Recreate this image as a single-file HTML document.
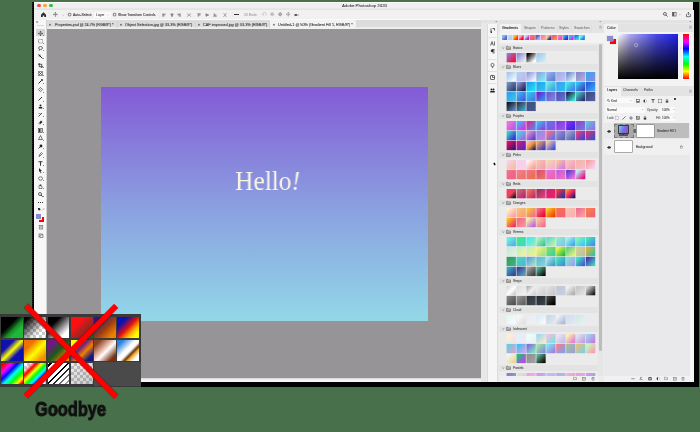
<!DOCTYPE html><html><head><meta charset="utf-8"><style>
*{margin:0;padding:0;box-sizing:border-box}
html,body{width:700px;height:432px;overflow:hidden;background:#48714b;font-family:"Liberation Sans",sans-serif;position:relative}
.ab{position:absolute}
.t{position:absolute;white-space:nowrap;color:#3a3a3a;font-size:3.6px;line-height:4px;will-change:transform;-webkit-text-stroke:0.1px currentColor}
.sw{position:absolute;width:9.3px;height:9.3px}
.rs{position:absolute;width:5px;height:5px}
.ic{position:absolute;overflow:visible}
</style></head><body>
<div class="ab" style="left:33px;top:2px;width:666px;height:385px;background:#000"></div>
<div class="ab" style="left:32px;top:2px;width:1px;height:385px;background:repeating-linear-gradient(#000 0 1px,#1a2a1c 1px 2px)"></div>
<div class="ab" style="left:33.5px;top:2px;width:659.6px;height:380px;background:#f4f4f4"></div>
<div class="ab" style="left:33.5px;top:2px;width:659.6px;height:8px;background:linear-gradient(#fbfbfb 0,#fbfbfb 1px,#efefef 1.5px,#efefef 6.3px,#e3e3e3 6.6px,#e3e3e3 7.8px,#f2f2f2 8px)"></div>
<div class="ab" style="left:37.2px;top:3.8px;width:3.6px;height:3.6px;border-radius:50%;background:#ee4a4e"></div>
<div class="ab" style="left:43.4px;top:3.8px;width:3.6px;height:3.6px;border-radius:50%;background:#f4a82a"></div>
<div class="ab" style="left:49.4px;top:3.8px;width:3.6px;height:3.6px;border-radius:50%;background:#2cc23c"></div>
<div class="t" style="left:341.5px;top:4px;font-size:4.3px;color:#404040">Adobe Photoshop 2020</div>
<div class="ab" style="left:33.5px;top:9.5px;width:660px;height:10px;background:#f1f1f1"></div>
<svg class="ic" style="left:40.50px;top:12.30px" width="5.00" height="5.00" viewBox="0 0 10 10" ><path d="M5 0.5L10 5.5V10H6.5V7H3.5V10H0V5.5Z" fill="#2b2b2b"/></svg>
<div class="ab" style="left:49px;top:11px;width:0.5px;height:7.5px;background:#ececec"></div>
<svg class="ic" style="left:53.20px;top:12.40px" width="4.80" height="4.80" viewBox="0 0 10 10" ><path d="M5 1V9M1 5H9" stroke="#6a6a6a" stroke-width="1.2"/><path d="M5 0L3 2.4H7ZM5 10L3 7.6H7ZM0 5L2.4 3V7ZM10 5L7.6 3V7Z" fill="#6a6a6a"/></svg>
<svg class="ic" style="left:61.50px;top:13.80px" width="2.20" height="2.20" viewBox="0 0 10 10" ><path d="M1 3L5 7L9 3" stroke="#777" stroke-width="1.5" fill="none"/></svg>
<div class="ab" style="left:66px;top:11px;width:0.5px;height:7.5px;background:#ececec"></div>
<svg class="ic" style="left:68.00px;top:13.20px" width="3.20" height="3.20" viewBox="0 0 10 10" ><rect x="1" y="1" width="8" height="8" rx="2" fill="none" stroke="#444" stroke-width="2"/></svg>
<div class="t" style="left:72.6px;top:12.6px;font-size:3.55px">Auto-Select:</div>
<div class="ab" style="left:94px;top:12px;width:16.5px;height:5.5px;background:#fafafa;border-radius:1px"></div>
<div class="t" style="left:96px;top:12.7px;font-size:3.4px;color:#555">Layer</div>
<svg class="ic" style="left:107.30px;top:14.10px" width="2.00" height="2.00" viewBox="0 0 10 10" ><path d="M1 3L5 7L9 3" stroke="#777" stroke-width="1.5" fill="none"/></svg>
<svg class="ic" style="left:112.50px;top:13.20px" width="3.20" height="3.20" viewBox="0 0 10 10" ><rect x="1" y="1" width="8" height="8" rx="2" fill="none" stroke="#444" stroke-width="2"/></svg>
<div class="t" style="left:117.5px;top:12.6px;font-size:3.32px">Show Transform Controls</div>
<div class="ab" style="left:158.5px;top:11px;width:0.5px;height:7.5px;background:#ececec"></div>
<svg class="ic" style="left:161.80px;top:12.80px" width="4.00" height="4.00" viewBox="0 0 10 10" ><path d="M1.5 0.5V9.5" stroke="#555" stroke-width="1.2"/><rect x="2.5" y="2" width="6.5" height="2.2" fill="#666"/><rect x="2.5" y="6" width="4" height="2.2" fill="#666"/></svg>
<svg class="ic" style="left:169.50px;top:12.80px" width="4.00" height="4.00" viewBox="0 0 10 10" ><path d="M5 0.5V9.5" stroke="#555" stroke-width="1.2"/><rect x="1" y="2" width="8" height="2.2" fill="#666"/><rect x="2.5" y="6" width="5" height="2.2" fill="#666"/></svg>
<svg class="ic" style="left:177.00px;top:12.80px" width="4.00" height="4.00" viewBox="0 0 10 10" ><path d="M8.5 0.5V9.5" stroke="#555" stroke-width="1.2"/><rect x="1" y="2" width="6.5" height="2.2" fill="#666"/><rect x="3.5" y="6" width="4" height="2.2" fill="#666"/></svg>
<svg class="ic" style="left:186.50px;top:12.80px" width="4.00" height="4.00" viewBox="0 0 10 10" ><path d="M1 1L4 5L1 9M9 1L6 5L9 9" stroke="#555" stroke-width="1.3" fill="none"/><path d="M4 5H6" stroke="#555"/></svg>
<svg class="ic" style="left:196.50px;top:12.80px" width="4.00" height="4.00" viewBox="0 0 10 10" ><path d="M0.5 1.5H9.5" stroke="#555" stroke-width="1.2"/><rect x="2" y="2.5" width="2.2" height="6.5" fill="#666"/><rect x="6" y="2.5" width="2.2" height="4" fill="#666"/></svg>
<svg class="ic" style="left:205.00px;top:12.80px" width="4.00" height="4.00" viewBox="0 0 10 10" ><path d="M0.5 5H9.5" stroke="#555" stroke-width="1.2"/><rect x="2" y="1" width="2.2" height="8" fill="#666"/><rect x="6" y="2.5" width="2.2" height="5" fill="#666"/></svg>
<svg class="ic" style="left:213.00px;top:12.80px" width="4.00" height="4.00" viewBox="0 0 10 10" ><path d="M0.5 8.5H9.5" stroke="#555" stroke-width="1.2"/><rect x="2" y="1" width="2.2" height="6.5" fill="#666"/><rect x="6" y="3.5" width="2.2" height="4" fill="#666"/></svg>
<svg class="ic" style="left:223.00px;top:12.80px" width="4.00" height="4.00" viewBox="0 0 10 10" ><path d="M1 1L5 4L9 1M1 9L5 6L9 9" stroke="#555" stroke-width="1.3" fill="none"/><path d="M5 4V6" stroke="#555"/></svg>
<div class="ab" style="left:232px;top:11px;width:0.5px;height:7.5px;background:#ececec"></div>
<div class="ab" style="left:234px;top:14.2px;width:5.2px;height:1.1px;background:#333"></div>
<div class="t" style="left:243.5px;top:12.6px;font-size:3.1px;color:#aaa">3D Mode:</div>
<svg class="ic" style="left:261.50px;top:12.40px" width="4.40" height="4.40" viewBox="0 0 10 10" ><path d="M2 7A4 4 0 1 1 8 8" fill="none" stroke="#b0b0b0" stroke-width="1.3"/><path d="M1 5L3 8L5 6" fill="#b0b0b0"/></svg>
<svg class="ic" style="left:270.20px;top:12.30px" width="4.40" height="4.40" viewBox="0 0 10 10" ><circle cx="5" cy="5" r="4.3" fill="#c4c4c4"/><path d="M2 4Q5 2 8 4" stroke="#aaa" fill="none"/></svg>
<svg class="ic" style="left:278.00px;top:12.40px" width="4.40" height="4.40" viewBox="0 0 10 10" ><path d="M5 0L10 5L5 10L0 5Z" fill="#8a8a8a"/><path d="M5 2V8M2 5H8" stroke="#f1f1f1" stroke-width="0.9"/></svg>
<svg class="ic" style="left:286.30px;top:12.40px" width="4.40" height="4.40" viewBox="0 0 10 10" ><path d="M5 1V9M1 5H9" stroke="#777" stroke-width="1"/><path d="M5 0L3.3 2H6.7ZM5 10L3.3 8H6.7ZM0 5L2 3.3V6.7ZM10 5L8 3.3V6.7Z" fill="#777"/></svg>
<svg class="ic" style="left:294.00px;top:12.60px" width="4.60" height="4.00" viewBox="0 0 10 10" ><rect x="0.5" y="2.5" width="6" height="5" fill="#555"/><path d="M6.5 5L10 2.5V7.5Z" fill="#777"/></svg>
<svg class="ic" style="left:662.50px;top:12.20px" width="4.80" height="4.80" viewBox="0 0 10 10" ><circle cx="4" cy="4" r="3" fill="none" stroke="#444" stroke-width="1.6"/><path d="M6.5 6.5L9.5 9.5" stroke="#444" stroke-width="1.8"/></svg>
<svg class="ic" style="left:672.00px;top:12.40px" width="4.60" height="4.40" viewBox="0 0 10 10" ><rect x="0.8" y="0.8" width="8.4" height="8.4" fill="none" stroke="#555" stroke-width="1.5"/><rect x="1" y="1" width="4" height="8" fill="#555"/></svg>
<svg class="ic" style="left:678.50px;top:14.00px" width="1.80" height="1.60" viewBox="0 0 10 10" ><path d="M0 2L5 8L10 2Z" fill="#888"/></svg>
<svg class="ic" style="left:686.20px;top:11.80px" width="4.80" height="5.00" viewBox="0 0 10 10" ><path d="M1 4V9.5H9V4" fill="none" stroke="#444" stroke-width="1.5"/><path d="M5 0.5V6M3 2.5L5 0.5L7 2.5" fill="none" stroke="#444" stroke-width="1.5"/></svg>
<div class="ab" style="left:47px;top:19px;width:434px;height:9.6px;background:linear-gradient(#fafafa 0,#fafafa 0.7px,#dcdcdc 1px,#dcdcdc 7.8px,#ededed 8.2px)"></div>
<div class="ab" style="left:117.0px;top:20.5px;width:0.5px;height:7px;background:#d6d6d6"></div>
<div class="t" style="left:49.0px;top:22.6px;font-size:3.4px;color:#333">&#215;</div>
<div class="t" style="left:54.5px;top:22.7px;font-size:3.69px;color:#3a3a3a">Properties.psd @ 24.7% (RGB/8*) *</div>
<div class="ab" style="left:195.0px;top:20.5px;width:0.5px;height:7px;background:#d6d6d6"></div>
<div class="t" style="left:120.0px;top:22.6px;font-size:3.4px;color:#333">&#215;</div>
<div class="t" style="left:125.2px;top:22.7px;font-size:3.82px;color:#3a3a3a">Object Selection.jpg @ 33.3% (RGB/8*)</div>
<div class="ab" style="left:269.2px;top:20.5px;width:0.5px;height:7px;background:#d6d6d6"></div>
<div class="t" style="left:198.0px;top:22.6px;font-size:3.4px;color:#333">&#215;</div>
<div class="t" style="left:202.8px;top:22.7px;font-size:3.85px;color:#3a3a3a">CAF improved.jpg @ 33.3% (RGB/8*)</div>
<div class="ab" style="left:269.7px;top:19.8px;width:86.7px;height:8.8px;background:#f2f2f2"></div>
<div class="t" style="left:273.0px;top:22.6px;font-size:3.4px;color:#333">&#215;</div>
<div class="t" style="left:278.0px;top:22.7px;font-size:3.82px;color:#3a3a3a">Untitled-1 @ 50% (Gradient Fill 1, RGB/8*) *</div>
<div class="ab" style="left:33.5px;top:19.5px;width:13.2px;height:362.5px;background:#f7f7f7;border-right:0.6px solid #d2d2d2"></div>
<svg class="ic" style="left:35.60px;top:20.60px" width="2.60" height="2.00" viewBox="0 0 10 10" ><path d="M0 1L4 5L0 9M5 1L9 5L5 9" stroke="#333" stroke-width="2.4" fill="none"/></svg>
<div class="ab" style="left:36.6px;top:24.8px;width:7.6px;height:0.6px;background:#d8d8d8"></div>
<div class="ab" style="left:35.8px;top:28.8px;width:9.4px;height:7.3px;background:#d5d5d5"></div>
<svg class="ic" style="left:38.00px;top:31.00px" width="5.00" height="5.00" viewBox="0 0 10 10" ><path d="M5 1V9M1 5H9" stroke="#555" stroke-width="0.9"/><path d="M5 0L2.8 2.6H7.2ZM5 10L2.8 7.4H7.2ZM0 5L2.6 2.8V7.2ZM10 5L7.4 2.8V7.2Z" fill="#333"/></svg>
<div class="ab" style="left:43.3px;top:35.2px;width:1px;height:1px;background:#888"></div>
<svg class="ic" style="left:38.00px;top:38.50px" width="5.00" height="5.00" viewBox="0 0 10 10" ><rect x="1" y="1" width="8" height="7" fill="none" stroke="#444" stroke-width="1.2" stroke-dasharray="1.5 1"/></svg>
<div class="ab" style="left:43.3px;top:42.7px;width:1px;height:1px;background:#888"></div>
<svg class="ic" style="left:38.00px;top:46.00px" width="5.00" height="5.00" viewBox="0 0 10 10" ><ellipse cx="5" cy="4" rx="4" ry="3" fill="none" stroke="#333" stroke-width="1.4"/><path d="M3 7L2 10" stroke="#333" stroke-width="1.2"/></svg>
<div class="ab" style="left:43.3px;top:50.2px;width:1px;height:1px;background:#888"></div>
<svg class="ic" style="left:38.00px;top:54.00px" width="5.00" height="5.00" viewBox="0 0 10 10" ><path d="M1 1L9 9" stroke="#222" stroke-width="2"/><path d="M1 4H4M4 1V4" stroke="#222" stroke-width="1.2"/></svg>
<div class="ab" style="left:43.3px;top:58.2px;width:1px;height:1px;background:#888"></div>
<svg class="ic" style="left:38.00px;top:62.50px" width="5.00" height="5.00" viewBox="0 0 10 10" ><path d="M2.5 0V7.5H10M0 2.5H7.5V10" stroke="#222" stroke-width="1.5" fill="none"/></svg>
<div class="ab" style="left:43.3px;top:66.7px;width:1px;height:1px;background:#888"></div>
<svg class="ic" style="left:38.00px;top:70.50px" width="5.00" height="5.00" viewBox="0 0 10 10" ><path d="M1 1L9 9M9 1L1 9" stroke="#333" stroke-width="1.4"/><rect x="1.5" y="1.5" width="7" height="7" fill="none" stroke="#333" stroke-width="1"/></svg>
<div class="ab" style="left:43.3px;top:74.7px;width:1px;height:1px;background:#888"></div>
<svg class="ic" style="left:38.00px;top:78.50px" width="5.00" height="5.00" viewBox="0 0 10 10" ><path d="M1 9L7 3" stroke="#222" stroke-width="2"/><circle cx="8" cy="2" r="1.8" fill="#222"/></svg>
<div class="ab" style="left:43.3px;top:82.7px;width:1px;height:1px;background:#888"></div>
<svg class="ic" style="left:38.00px;top:87.30px" width="5.00" height="5.00" viewBox="0 0 10 10" ><rect x="2" y="2" width="6" height="6" transform="rotate(45 5 5)" fill="none" stroke="#444" stroke-width="1.3"/><path d="M3 7L7 3" stroke="#444" stroke-width="1"/></svg>
<div class="ab" style="left:43.3px;top:91.5px;width:1px;height:1px;background:#888"></div>
<svg class="ic" style="left:38.00px;top:96.30px" width="5.00" height="5.00" viewBox="0 0 10 10" ><path d="M1 9L8 2" stroke="#222" stroke-width="1.8"/></svg>
<div class="ab" style="left:43.3px;top:100.5px;width:1px;height:1px;background:#888"></div>
<svg class="ic" style="left:38.00px;top:104.00px" width="5.00" height="5.00" viewBox="0 0 10 10" ><circle cx="5" cy="3" r="2" fill="#222"/><rect x="1.5" y="6" width="7" height="3" fill="#222"/></svg>
<div class="ab" style="left:43.3px;top:108.2px;width:1px;height:1px;background:#888"></div>
<svg class="ic" style="left:38.00px;top:111.80px" width="5.00" height="5.00" viewBox="0 0 10 10" ><path d="M1 9L8 2" stroke="#222" stroke-width="1.6"/><path d="M1 4L3 2L5 4" stroke="#222" stroke-width="1" fill="none"/></svg>
<div class="ab" style="left:43.3px;top:116.0px;width:1px;height:1px;background:#888"></div>
<svg class="ic" style="left:38.00px;top:119.40px" width="5.00" height="5.00" viewBox="0 0 10 10" ><path d="M2 8L6 3L9 6L5 10Z" fill="#222"/><path d="M0 9.5H6" stroke="#555" stroke-width="0.8"/></svg>
<div class="ab" style="left:43.3px;top:123.6px;width:1px;height:1px;background:#888"></div>
<svg class="ic" style="left:38.00px;top:127.50px" width="5.00" height="5.00" viewBox="0 0 10 10" ><rect x="1" y="1" width="8" height="8" fill="none" stroke="#333" stroke-width="1.2"/><rect x="2" y="2" width="3" height="6" fill="#333"/><rect x="5" y="2" width="2" height="6" fill="#888"/></svg>
<div class="ab" style="left:43.3px;top:131.7px;width:1px;height:1px;background:#888"></div>
<svg class="ic" style="left:38.00px;top:135.40px" width="5.00" height="5.00" viewBox="0 0 10 10" ><path d="M5 1L9 9H1Z" fill="none" stroke="#333" stroke-width="1.3"/></svg>
<div class="ab" style="left:43.3px;top:139.6px;width:1px;height:1px;background:#888"></div>
<svg class="ic" style="left:38.00px;top:143.80px" width="5.00" height="5.00" viewBox="0 0 10 10" ><circle cx="6" cy="4" r="2.8" fill="#222"/><path d="M4 6L1 9" stroke="#222" stroke-width="1.5"/></svg>
<div class="ab" style="left:43.3px;top:148.0px;width:1px;height:1px;background:#888"></div>
<svg class="ic" style="left:38.00px;top:152.40px" width="5.00" height="5.00" viewBox="0 0 10 10" ><path d="M2 9L4 4L7 1L9 3L6 6Z" fill="none" stroke="#333" stroke-width="1.3"/></svg>
<div class="ab" style="left:43.3px;top:156.6px;width:1px;height:1px;background:#888"></div>
<svg class="ic" style="left:38.00px;top:160.70px" width="5.00" height="5.00" viewBox="0 0 10 10" ><path d="M1 1.5H9M5 1.5V9.5" stroke="#222" stroke-width="1.8"/></svg>
<div class="ab" style="left:43.3px;top:164.9px;width:1px;height:1px;background:#888"></div>
<svg class="ic" style="left:38.00px;top:168.00px" width="5.00" height="5.00" viewBox="0 0 10 10" ><path d="M2 0L8 6H5L7 10L5.5 10.5L3.5 6.5L2 8Z" fill="#222"/></svg>
<div class="ab" style="left:43.3px;top:172.2px;width:1px;height:1px;background:#888"></div>
<svg class="ic" style="left:38.00px;top:176.00px" width="5.00" height="5.00" viewBox="0 0 10 10" ><ellipse cx="5" cy="5" rx="4" ry="3.5" fill="none" stroke="#333" stroke-width="1.2"/></svg>
<div class="ab" style="left:43.3px;top:180.2px;width:1px;height:1px;background:#888"></div>
<svg class="ic" style="left:38.00px;top:184.00px" width="5.00" height="5.00" viewBox="0 0 10 10" ><path d="M2 9V4C2 3 3.5 3 3.5 4V2C3.5 1 5 1 5 2V4 2C5 1 6.5 1 6.5 2V5C6.5 4 8 4 8 5V9Z" fill="none" stroke="#333" stroke-width="1.1"/></svg>
<div class="ab" style="left:43.3px;top:188.2px;width:1px;height:1px;background:#888"></div>
<svg class="ic" style="left:38.00px;top:192.00px" width="5.00" height="5.00" viewBox="0 0 10 10" ><circle cx="4" cy="4" r="3" fill="none" stroke="#222" stroke-width="1.4"/><path d="M6 6L9.5 9.5" stroke="#222" stroke-width="1.8"/></svg>
<div class="ab" style="left:43.3px;top:196.2px;width:1px;height:1px;background:#888"></div>
<div class="ab" style="left:38.4px;top:202.3px;width:5px;height:1.1px;background:repeating-linear-gradient(90deg,#333 0 1.2px,transparent 1.2px 1.9px)"></div>
<svg class="ic" style="left:37.50px;top:207.50px" width="3.00" height="3.00" viewBox="0 0 10 10" ><rect x="0" y="0" width="6" height="6" fill="#222"/><rect x="3" y="3" width="6" height="6" fill="none" stroke="#222"/></svg>
<svg class="ic" style="left:42.00px;top:207.50px" width="3.00" height="3.00" viewBox="0 0 10 10" ><path d="M1 8L8 1" stroke="#444" stroke-width="1.5"/></svg>
<div class="ab" style="left:38.9px;top:216.7px;width:5.5px;height:5.3px;background:#f00"></div>
<div class="ab" style="left:36px;top:213.8px;width:5.2px;height:5.2px;background:#8a8ad0;box-shadow:0.4px 0.4px 0 0.5px #fff"></div>
<svg class="ic" style="left:38.00px;top:225.00px" width="6.00" height="4.50" viewBox="0 0 10 10" ><rect x="1" y="1" width="8" height="8" fill="none" stroke="#555" stroke-width="1.2"/><circle cx="5" cy="5" r="2.3" fill="none" stroke="#555" stroke-width="1"/></svg>
<svg class="ic" style="left:38.00px;top:232.50px" width="6.00" height="5.00" viewBox="0 0 10 10" ><rect x="1" y="2" width="7" height="6" fill="none" stroke="#555" stroke-width="1.2"/><rect x="3" y="4" width="6" height="5" fill="#f7f7f7" stroke="#555" stroke-width="1.2"/></svg>
<div class="ab" style="left:47px;top:28.6px;width:434px;height:349.4px;background:#969496"></div>
<div class="ab" style="left:47px;top:377.8px;width:434px;height:4.2px;background:linear-gradient(#cfcfcf,#f0f0f0 40%,#fafafa)"></div>
<div class="ab" style="left:100.7px;top:86.8px;width:327.2px;height:234px;background:linear-gradient(#845ad6,#8a9ee0 50%,#92d8e8)"></div>
<div class="ab" style="left:235px;top:165px;font-family:'Liberation Serif',serif;font-size:26.5px;line-height:32px;color:#fbf6e4;white-space:nowrap;transform-origin:0 0;transform:scaleX(0.96);will-change:transform">Hello<i>!</i></div>
<div class="ab" style="left:481px;top:19.5px;width:212.5px;height:362.5px;background:#e8e8e8"></div>
<div class="ab" style="left:481px;top:19.5px;width:212.5px;height:3.5px;background:#e3e3e3"></div>
<svg class="ic" style="left:495.00px;top:20.50px" width="2.40" height="1.60" viewBox="0 0 10 10" ><path d="M0 2L5 8L10 2Z" fill="#555"/></svg>
<svg class="ic" style="left:598.50px;top:20.50px" width="2.40" height="1.60" viewBox="0 0 10 10" ><path d="M0 2L5 8L10 2Z" fill="#555"/></svg>
<svg class="ic" style="left:689.40px;top:20.50px" width="2.40" height="1.60" viewBox="0 0 10 10" ><path d="M0 2L5 8L10 2Z" fill="#555"/></svg>
<div class="ab" style="left:487.2px;top:23.5px;width:11.2px;height:358.5px;background:#f6f6f6;border-left:0.5px solid #dcdcdc;border-right:0.5px solid #dcdcdc"></div>
<div class="ab" style="left:487.5px;top:37.0px;width:10.6px;height:1px;background:#e2e2e2"></div>
<div class="ab" style="left:487.5px;top:59.0px;width:10.6px;height:1px;background:#e2e2e2"></div>
<div class="ab" style="left:487.5px;top:70.5px;width:10.6px;height:1px;background:#e2e2e2"></div>
<div class="ab" style="left:487.5px;top:82.5px;width:10.6px;height:1px;background:#e2e2e2"></div>
<svg class="ic" style="left:490.40px;top:28.00px" width="5.00" height="5.00" viewBox="0 0 10 10" ><path d="M2 1V9M2 9H4M5 1L9 1L9 5" stroke="#222" stroke-width="1.5" fill="none"/><circle cx="2.5" cy="8" r="1.5" fill="#222"/></svg>
<svg class="ic" style="left:490.40px;top:40.70px" width="5.00" height="5.00" viewBox="0 0 10 10" ><path d="M1 9L4 1L7 9M2.5 6H5.5M9 1V9" stroke="#222" stroke-width="1.2" fill="none"/></svg>
<svg class="ic" style="left:490.40px;top:49.00px" width="5.00" height="5.00" viewBox="0 0 10 10" ><path d="M4 1H9M6 1V9M8 1V9" stroke="#222" stroke-width="1.2"/><circle cx="4" cy="3.5" r="2.5" fill="#222"/></svg>
<svg class="ic" style="left:490.40px;top:62.50px" width="5.00" height="5.00" viewBox="0 0 10 10" ><circle cx="5" cy="4" r="3.2" fill="none" stroke="#222" stroke-width="1.2"/><path d="M3.5 8H6.5M4 9.5H6" stroke="#222" stroke-width="1"/></svg>
<svg class="ic" style="left:490.40px;top:75.00px" width="5.00" height="5.00" viewBox="0 0 10 10" ><rect x="1" y="1" width="8" height="8" rx="1" fill="none" stroke="#222" stroke-width="1.3"/><path d="M5 5V1M5 5H9" stroke="#222" stroke-width="1.2"/></svg>
<svg class="ic" style="left:490.40px;top:87.70px" width="5.00" height="5.00" viewBox="0 0 10 10" ><circle cx="3" cy="3" r="2" fill="#222"/><circle cx="7" cy="3" r="2" fill="#222"/><rect x="0.5" y="6" width="9" height="3" fill="#222"/></svg>
<svg class="ic" style="left:492px;top:161px" width="5" height="6" viewBox="0 0 10 12"><path d="M3 2L7.5 8.5L5 10Z" fill="#fff" stroke="#fff" stroke-width="2.5"/><ellipse cx="5" cy="6" rx="1.7" ry="3" transform="rotate(-30 5 6)" fill="#111"/></svg>
<div class="ab" style="left:499px;top:23px;width:104.5px;height:359px;background:#ebebeb"></div>
<div class="ab" style="left:499px;top:23.4px;width:104.5px;height:9.4px;background:#e4e4e4"></div>
<div class="ab" style="left:500.3px;top:24px;width:20.5px;height:8.5px;background:#f2f2f2"></div>
<div class="t" style="left:502.3px;top:25.9px;font-size:3.7px;color:#2a2a2a">Gradients</div>
<div class="t" style="left:523.5px;top:25.9px;font-size:3.50px;color:#5a5a5a;-webkit-text-stroke:0">Shapes</div>
<div class="t" style="left:540.5px;top:25.9px;font-size:3.70px;color:#5a5a5a;-webkit-text-stroke:0">Patterns</div>
<div class="t" style="left:559.0px;top:25.9px;font-size:3.60px;color:#5a5a5a;-webkit-text-stroke:0">Styles</div>
<div class="t" style="left:573.5px;top:25.9px;font-size:3.65px;color:#5a5a5a;-webkit-text-stroke:0">Swatches</div>
<div class="ab" style="left:538.4px;top:24.5px;width:0.5px;height:7px;background:#dfdfdf"></div>
<div class="ab" style="left:556.6px;top:24.5px;width:0.5px;height:7px;background:#dfdfdf"></div>
<div class="ab" style="left:571.3px;top:24.5px;width:0.5px;height:7px;background:#dfdfdf"></div>
<div class="ab" style="left:591.4px;top:24.5px;width:0.5px;height:7px;background:#dfdfdf"></div>
<svg class="ic" style="left:598.50px;top:26.30px" width="3.00" height="2.40" viewBox="0 0 10 10" ><path d="M0 1H10M0 5H10M0 9H10" stroke="#777" stroke-width="1.6"/></svg>
<div class="ab" style="left:499.5px;top:32.5px;width:104px;height:10.5px;background:#f3f3f3"></div>
<svg class="ab" style="left:502.2px;top:35.2px" width="84" height="5.2"><defs><linearGradient id="r0" x1="0" y1="0" x2="1" y2="1"><stop offset="0.3" stop-color="#60c8e8"/><stop offset="0.7" stop-color="#8050d0"/></linearGradient><linearGradient id="r1" x1="0" y1="0" x2="1" y2="1"><stop offset="0.3" stop-color="#a8e4f0"/><stop offset="0.7" stop-color="#c0c8f0"/></linearGradient><linearGradient id="r2" x1="0" y1="0" x2="1" y2="1"><stop offset="0.3" stop-color="#ffc020"/><stop offset="0.7" stop-color="#ff3010"/></linearGradient><linearGradient id="r3" x1="0" y1="0" x2="1" y2="1"><stop offset="0.3" stop-color="#ffb0c0"/><stop offset="0.7" stop-color="#ff0030"/></linearGradient><linearGradient id="r4" x1="0" y1="0" x2="1" y2="1"><stop offset="0.3" stop-color="#b0e8f0"/><stop offset="0.7" stop-color="#d020c0"/></linearGradient><linearGradient id="r5" x1="0" y1="0" x2="1" y2="1"><stop offset="0.3" stop-color="#f07090"/><stop offset="0.7" stop-color="#f06050"/></linearGradient><linearGradient id="r6" x1="0" y1="0" x2="1" y2="1"><stop offset="0.3" stop-color="#5060e0"/><stop offset="0.7" stop-color="#c0a0f0"/></linearGradient><linearGradient id="r7" x1="0" y1="0" x2="1" y2="1"><stop offset="0.3" stop-color="#f08898"/><stop offset="0.7" stop-color="#f8a0a0"/></linearGradient><linearGradient id="r8" x1="0" y1="0" x2="1" y2="1"><stop offset="0.3" stop-color="#f8c060"/><stop offset="0.7" stop-color="#3030a0"/></linearGradient><linearGradient id="r9" x1="0" y1="0" x2="1" y2="1"><stop offset="0.3" stop-color="#f06080"/><stop offset="0.7" stop-color="#f09040"/></linearGradient><linearGradient id="r10" x1="0" y1="0" x2="1" y2="1"><stop offset="0.3" stop-color="#f070d0"/><stop offset="0.7" stop-color="#e060a0"/></linearGradient><linearGradient id="r11" x1="0" y1="0" x2="1" y2="1"><stop offset="0.3" stop-color="#30a0f0"/><stop offset="0.7" stop-color="#3030e0"/></linearGradient><linearGradient id="r12" x1="0" y1="0" x2="1" y2="1"><stop offset="0.3" stop-color="#30c0f0"/><stop offset="0.7" stop-color="#f020f0"/></linearGradient><linearGradient id="r13" x1="0" y1="0" x2="1" y2="1"><stop offset="0.3" stop-color="#2080f0"/><stop offset="0.7" stop-color="#40d0e0"/></linearGradient><linearGradient id="r14" x1="0" y1="0" x2="1" y2="1"><stop offset="0.3" stop-color="#60f0e0"/><stop offset="0.7" stop-color="#2080f0"/></linearGradient></defs><rect x="0.00" y="0" width="5" height="5.2" fill="url(#r0)"/><rect x="5.56" y="0" width="5" height="5.2" fill="url(#r1)"/><rect x="11.12" y="0" width="5" height="5.2" fill="url(#r2)"/><rect x="16.68" y="0" width="5" height="5.2" fill="url(#r3)"/><rect x="22.24" y="0" width="5" height="5.2" fill="url(#r4)"/><rect x="27.80" y="0" width="5" height="5.2" fill="url(#r5)"/><rect x="33.36" y="0" width="5" height="5.2" fill="url(#r6)"/><rect x="38.92" y="0" width="5" height="5.2" fill="url(#r7)"/><rect x="44.48" y="0" width="5" height="5.2" fill="url(#r8)"/><rect x="50.04" y="0" width="5" height="5.2" fill="url(#r9)"/><rect x="55.60" y="0" width="5" height="5.2" fill="url(#r10)"/><rect x="61.16" y="0" width="5" height="5.2" fill="url(#r11)"/><rect x="66.72" y="0" width="5" height="5.2" fill="url(#r12)"/><rect x="72.28" y="0" width="5" height="5.2" fill="url(#r13)"/><rect x="77.84" y="0" width="5" height="5.2" fill="url(#r14)"/></svg>
<div class="ab" style="left:499px;top:43px;width:104.5px;height:333px;overflow:hidden">
<div class="ab" style="left:0;top:1.80px;width:99px;height:6.6px;background:#e3e3e3"></div>
<svg class="ic" style="left:3.00px;top:4.00px" width="2.6" height="2" viewBox="0 0 10 10"><path d="M1 2L5 8L9 2" stroke="#555" stroke-width="2.2" fill="none"/></svg>
<svg class="ic" style="left:7.00px;top:3.10px" width="5" height="3.8" viewBox="0 0 10 8"><path d="M0.8 0.8H4L5 2H9.2V7.2H0.8Z" fill="#a8a8a8" stroke="#6a6a6a" stroke-width="1.3"/><path d="M0.8 3.2H9.2" stroke="#d8d8d8" stroke-width="0.8"/></svg>
<div class="t" style="left:14.20px;top:3.00px;font-size:3.2px;color:#555">Basics</div>
<div class="ab" style="left:0;top:20.80px;width:99px;height:6.6px;background:#e3e3e3"></div>
<svg class="ic" style="left:3.00px;top:23.00px" width="2.6" height="2" viewBox="0 0 10 10"><path d="M1 2L5 8L9 2" stroke="#555" stroke-width="2.2" fill="none"/></svg>
<svg class="ic" style="left:7.00px;top:22.10px" width="5" height="3.8" viewBox="0 0 10 8"><path d="M0.8 0.8H4L5 2H9.2V7.2H0.8Z" fill="#a8a8a8" stroke="#6a6a6a" stroke-width="1.3"/><path d="M0.8 3.2H9.2" stroke="#d8d8d8" stroke-width="0.8"/></svg>
<div class="t" style="left:14.20px;top:22.00px;font-size:3.2px;color:#555">Blues</div>
<div class="ab" style="left:0;top:69.80px;width:99px;height:6.6px;background:#e3e3e3"></div>
<svg class="ic" style="left:3.00px;top:72.00px" width="2.6" height="2" viewBox="0 0 10 10"><path d="M1 2L5 8L9 2" stroke="#555" stroke-width="2.2" fill="none"/></svg>
<svg class="ic" style="left:7.00px;top:71.10px" width="5" height="3.8" viewBox="0 0 10 8"><path d="M0.8 0.8H4L5 2H9.2V7.2H0.8Z" fill="#a8a8a8" stroke="#6a6a6a" stroke-width="1.3"/><path d="M0.8 3.2H9.2" stroke="#d8d8d8" stroke-width="0.8"/></svg>
<div class="t" style="left:14.20px;top:71.00px;font-size:3.2px;color:#555">Purples</div>
<div class="ab" style="left:0;top:108.80px;width:99px;height:6.6px;background:#e3e3e3"></div>
<svg class="ic" style="left:3.00px;top:111.00px" width="2.6" height="2" viewBox="0 0 10 10"><path d="M1 2L5 8L9 2" stroke="#555" stroke-width="2.2" fill="none"/></svg>
<svg class="ic" style="left:7.00px;top:110.10px" width="5" height="3.8" viewBox="0 0 10 8"><path d="M0.8 0.8H4L5 2H9.2V7.2H0.8Z" fill="#a8a8a8" stroke="#6a6a6a" stroke-width="1.3"/><path d="M0.8 3.2H9.2" stroke="#d8d8d8" stroke-width="0.8"/></svg>
<div class="t" style="left:14.20px;top:110.00px;font-size:3.2px;color:#555">Pinks</div>
<div class="ab" style="left:0;top:137.80px;width:99px;height:6.6px;background:#e3e3e3"></div>
<svg class="ic" style="left:3.00px;top:140.00px" width="2.6" height="2" viewBox="0 0 10 10"><path d="M1 2L5 8L9 2" stroke="#555" stroke-width="2.2" fill="none"/></svg>
<svg class="ic" style="left:7.00px;top:139.10px" width="5" height="3.8" viewBox="0 0 10 8"><path d="M0.8 0.8H4L5 2H9.2V7.2H0.8Z" fill="#a8a8a8" stroke="#6a6a6a" stroke-width="1.3"/><path d="M0.8 3.2H9.2" stroke="#d8d8d8" stroke-width="0.8"/></svg>
<div class="t" style="left:14.20px;top:139.00px;font-size:3.2px;color:#555">Reds</div>
<div class="ab" style="left:0;top:156.80px;width:99px;height:6.6px;background:#e3e3e3"></div>
<svg class="ic" style="left:3.00px;top:159.00px" width="2.6" height="2" viewBox="0 0 10 10"><path d="M1 2L5 8L9 2" stroke="#555" stroke-width="2.2" fill="none"/></svg>
<svg class="ic" style="left:7.00px;top:158.10px" width="5" height="3.8" viewBox="0 0 10 8"><path d="M0.8 0.8H4L5 2H9.2V7.2H0.8Z" fill="#a8a8a8" stroke="#6a6a6a" stroke-width="1.3"/><path d="M0.8 3.2H9.2" stroke="#d8d8d8" stroke-width="0.8"/></svg>
<div class="t" style="left:14.20px;top:158.00px;font-size:3.2px;color:#555">Oranges</div>
<div class="ab" style="left:0;top:185.80px;width:99px;height:6.6px;background:#e3e3e3"></div>
<svg class="ic" style="left:3.00px;top:188.00px" width="2.6" height="2" viewBox="0 0 10 10"><path d="M1 2L5 8L9 2" stroke="#555" stroke-width="2.2" fill="none"/></svg>
<svg class="ic" style="left:7.00px;top:187.10px" width="5" height="3.8" viewBox="0 0 10 8"><path d="M0.8 0.8H4L5 2H9.2V7.2H0.8Z" fill="#a8a8a8" stroke="#6a6a6a" stroke-width="1.3"/><path d="M0.8 3.2H9.2" stroke="#d8d8d8" stroke-width="0.8"/></svg>
<div class="t" style="left:14.20px;top:187.00px;font-size:3.2px;color:#555">Greens</div>
<div class="ab" style="left:0;top:234.80px;width:99px;height:6.6px;background:#e3e3e3"></div>
<svg class="ic" style="left:3.00px;top:237.00px" width="2.6" height="2" viewBox="0 0 10 10"><path d="M1 2L5 8L9 2" stroke="#555" stroke-width="2.2" fill="none"/></svg>
<svg class="ic" style="left:7.00px;top:236.10px" width="5" height="3.8" viewBox="0 0 10 8"><path d="M0.8 0.8H4L5 2H9.2V7.2H0.8Z" fill="#a8a8a8" stroke="#6a6a6a" stroke-width="1.3"/><path d="M0.8 3.2H9.2" stroke="#d8d8d8" stroke-width="0.8"/></svg>
<div class="t" style="left:14.20px;top:236.00px;font-size:3.2px;color:#555">Grays</div>
<div class="ab" style="left:0;top:263.80px;width:99px;height:6.6px;background:#e3e3e3"></div>
<svg class="ic" style="left:3.00px;top:266.00px" width="2.6" height="2" viewBox="0 0 10 10"><path d="M1 2L5 8L9 2" stroke="#555" stroke-width="2.2" fill="none"/></svg>
<svg class="ic" style="left:7.00px;top:265.10px" width="5" height="3.8" viewBox="0 0 10 8"><path d="M0.8 0.8H4L5 2H9.2V7.2H0.8Z" fill="#a8a8a8" stroke="#6a6a6a" stroke-width="1.3"/><path d="M0.8 3.2H9.2" stroke="#d8d8d8" stroke-width="0.8"/></svg>
<div class="t" style="left:14.20px;top:265.00px;font-size:3.2px;color:#555">Cloud</div>
<div class="ab" style="left:0;top:282.80px;width:99px;height:6.6px;background:#e3e3e3"></div>
<svg class="ic" style="left:3.00px;top:285.00px" width="2.6" height="2" viewBox="0 0 10 10"><path d="M1 2L5 8L9 2" stroke="#555" stroke-width="2.2" fill="none"/></svg>
<svg class="ic" style="left:7.00px;top:284.10px" width="5" height="3.8" viewBox="0 0 10 8"><path d="M0.8 0.8H4L5 2H9.2V7.2H0.8Z" fill="#a8a8a8" stroke="#6a6a6a" stroke-width="1.3"/><path d="M0.8 3.2H9.2" stroke="#d8d8d8" stroke-width="0.8"/></svg>
<div class="t" style="left:14.20px;top:284.00px;font-size:3.2px;color:#555">Iridescent</div>
<div class="ab" style="left:0;top:321.80px;width:99px;height:6.6px;background:#e3e3e3"></div>
<svg class="ic" style="left:3.00px;top:324.00px" width="2.6" height="2" viewBox="0 0 10 10"><path d="M1 2L5 8L9 2" stroke="#555" stroke-width="2.2" fill="none"/></svg>
<svg class="ic" style="left:7.00px;top:323.10px" width="5" height="3.8" viewBox="0 0 10 8"><path d="M0.8 0.8H4L5 2H9.2V7.2H0.8Z" fill="#a8a8a8" stroke="#6a6a6a" stroke-width="1.3"/><path d="M0.8 3.2H9.2" stroke="#d8d8d8" stroke-width="0.8"/></svg>
<div class="t" style="left:14.20px;top:323.00px;font-size:3.2px;color:#555">Pastels</div>
<svg class="ab" style="left:0;top:0" width="104.5" height="333"><defs><linearGradient id="g0" x1="0" y1="0" x2="1" y2="1"><stop offset="0.150" stop-color="#8a7ad0"/><stop offset="0.850" stop-color="#ff0830"/></linearGradient><linearGradient id="g1" x1="0" y1="0" x2="1" y2="1"><stop offset="0.150" stop-color="#8a90d8"/><stop offset="0.850" stop-color="#e8e8f0"/></linearGradient><linearGradient id="g2" x1="0" y1="0" x2="1" y2="1"><stop offset="0.150" stop-color="#000"/><stop offset="0.850" stop-color="#fff"/></linearGradient><linearGradient id="g3" x1="0" y1="0" x2="1" y2="1"><stop offset="0.150" stop-color="#a8c8f0"/><stop offset="0.850" stop-color="#c8ecf4"/></linearGradient><linearGradient id="g4" x1="0" y1="0" x2="1" y2="1"><stop offset="0.150" stop-color="#a8c8f0"/><stop offset="0.850" stop-color="#f0f8ff"/></linearGradient><linearGradient id="g5" x1="0" y1="0" x2="1" y2="1"><stop offset="0.150" stop-color="#b0d0f0"/><stop offset="0.850" stop-color="#c0b8f0"/></linearGradient><linearGradient id="g6" x1="0" y1="0" x2="1" y2="1"><stop offset="0.150" stop-color="#90a0e0"/><stop offset="0.850" stop-color="#f0f0ff"/></linearGradient><linearGradient id="g7" x1="0" y1="0" x2="1" y2="1"><stop offset="0.150" stop-color="#90a8e0"/><stop offset="0.850" stop-color="#80e8f0"/></linearGradient><linearGradient id="g8" x1="0" y1="0" x2="1" y2="1"><stop offset="0.150" stop-color="#90b0f0"/><stop offset="0.850" stop-color="#6080d0"/></linearGradient><linearGradient id="g9" x1="0" y1="0" x2="1" y2="1"><stop offset="0.150" stop-color="#a0b0e8"/><stop offset="0.850" stop-color="#c0c0f0"/></linearGradient><linearGradient id="g10" x1="0" y1="0" x2="1" y2="1"><stop offset="0.150" stop-color="#7090d0"/><stop offset="0.850" stop-color="#e0f0f8"/></linearGradient><linearGradient id="g11" x1="0" y1="0" x2="1" y2="1"><stop offset="0.150" stop-color="#8888c8"/><stop offset="0.850" stop-color="#b0b0e0"/></linearGradient><linearGradient id="g12" x1="0" y1="0" x2="1" y2="1"><stop offset="0.150" stop-color="#40a0f0"/><stop offset="0.850" stop-color="#8090e0"/></linearGradient><linearGradient id="g13" x1="0" y1="0" x2="1" y2="1"><stop offset="0.150" stop-color="#7090b8"/><stop offset="0.850" stop-color="#304070"/></linearGradient><linearGradient id="g14" x1="0" y1="0" x2="1" y2="1"><stop offset="0.150" stop-color="#8090d0"/><stop offset="0.850" stop-color="#202050"/></linearGradient><linearGradient id="g15" x1="0" y1="0" x2="1" y2="1"><stop offset="0.150" stop-color="#20a0f0"/><stop offset="0.850" stop-color="#20e0f0"/></linearGradient><linearGradient id="g16" x1="0" y1="0" x2="1" y2="1"><stop offset="0.150" stop-color="#20a8f0"/><stop offset="0.850" stop-color="#30c0f0"/></linearGradient><linearGradient id="g17" x1="0" y1="0" x2="1" y2="1"><stop offset="0.150" stop-color="#60e8e8"/><stop offset="0.850" stop-color="#40a0e0"/></linearGradient><linearGradient id="g18" x1="0" y1="0" x2="1" y2="1"><stop offset="0.150" stop-color="#40a0f0"/><stop offset="0.850" stop-color="#20c0f0"/></linearGradient><linearGradient id="g19" x1="0" y1="0" x2="1" y2="1"><stop offset="0.150" stop-color="#40e0e0"/><stop offset="0.850" stop-color="#4080f0"/></linearGradient><linearGradient id="g20" x1="0" y1="0" x2="1" y2="1"><stop offset="0.150" stop-color="#30c0f0"/><stop offset="0.850" stop-color="#4040c0"/></linearGradient><linearGradient id="g21" x1="0" y1="0" x2="1" y2="1"><stop offset="0.150" stop-color="#2060e0"/><stop offset="0.850" stop-color="#40a0f0"/></linearGradient><linearGradient id="g22" x1="0" y1="0" x2="1" y2="1"><stop offset="0.150" stop-color="#30a0f0"/><stop offset="0.850" stop-color="#40c0e0"/></linearGradient><linearGradient id="g23" x1="0" y1="0" x2="1" y2="1"><stop offset="0.150" stop-color="#40b0f0"/><stop offset="0.850" stop-color="#4060e0"/></linearGradient><linearGradient id="g24" x1="0" y1="0" x2="1" y2="1"><stop offset="0.150" stop-color="#30c0f0"/><stop offset="0.850" stop-color="#4080e0"/></linearGradient><linearGradient id="g25" x1="0" y1="0" x2="1" y2="1"><stop offset="0.150" stop-color="#7020d0"/><stop offset="0.850" stop-color="#3090f0"/></linearGradient><linearGradient id="g26" x1="0" y1="0" x2="1" y2="1"><stop offset="0.150" stop-color="#6060d0"/><stop offset="0.850" stop-color="#8080e0"/></linearGradient><linearGradient id="g27" x1="0" y1="0" x2="1" y2="1"><stop offset="0.150" stop-color="#5050b0"/><stop offset="0.850" stop-color="#6070d0"/></linearGradient><linearGradient id="g28" x1="0" y1="0" x2="1" y2="1"><stop offset="0.150" stop-color="#202050"/><stop offset="0.850" stop-color="#40e0d0"/></linearGradient><linearGradient id="g29" x1="0" y1="0" x2="1" y2="1"><stop offset="0.150" stop-color="#40c0c0"/><stop offset="0.850" stop-color="#303070"/></linearGradient><linearGradient id="g30" x1="0" y1="0" x2="1" y2="1"><stop offset="0.150" stop-color="#404880"/><stop offset="0.850" stop-color="#5060a0"/></linearGradient><linearGradient id="g31" x1="0" y1="0" x2="1" y2="1"><stop offset="0.150" stop-color="#101828"/><stop offset="0.850" stop-color="#6080b0"/></linearGradient><linearGradient id="g32" x1="0" y1="0" x2="1" y2="1"><stop offset="0.150" stop-color="#303848"/><stop offset="0.850" stop-color="#40a0c0"/></linearGradient><linearGradient id="g33" x1="0" y1="0" x2="1" y2="1"><stop offset="0.150" stop-color="#405080"/><stop offset="0.850" stop-color="#455888"/></linearGradient><linearGradient id="g34" x1="0" y1="0" x2="1" y2="1"><stop offset="0.150" stop-color="#f070e0"/><stop offset="0.850" stop-color="#b060e0"/></linearGradient><linearGradient id="g35" x1="0" y1="0" x2="1" y2="1"><stop offset="0.150" stop-color="#30c0f0"/><stop offset="0.850" stop-color="#f020f0"/></linearGradient><linearGradient id="g36" x1="0" y1="0" x2="1" y2="1"><stop offset="0.150" stop-color="#d03090"/><stop offset="0.850" stop-color="#6080f0"/></linearGradient><linearGradient id="g37" x1="0" y1="0" x2="1" y2="1"><stop offset="0.150" stop-color="#30c0f0"/><stop offset="0.850" stop-color="#9040e0"/></linearGradient><linearGradient id="g38" x1="0" y1="0" x2="1" y2="1"><stop offset="0.150" stop-color="#6070f0"/><stop offset="0.850" stop-color="#9050e0"/></linearGradient><linearGradient id="g39" x1="0" y1="0" x2="1" y2="1"><stop offset="0.150" stop-color="#8040e0"/><stop offset="0.850" stop-color="#a050f0"/></linearGradient><linearGradient id="g40" x1="0" y1="0" x2="1" y2="1"><stop offset="0.150" stop-color="#8030f0"/><stop offset="0.850" stop-color="#4020f0"/></linearGradient><linearGradient id="g41" x1="0" y1="0" x2="1" y2="1"><stop offset="0.150" stop-color="#8050d0"/><stop offset="0.850" stop-color="#8070e0"/></linearGradient><linearGradient id="g42" x1="0" y1="0" x2="1" y2="1"><stop offset="0.150" stop-color="#60c0d0"/><stop offset="0.850" stop-color="#9070f0"/></linearGradient><linearGradient id="g43" x1="0" y1="0" x2="1" y2="1"><stop offset="0.150" stop-color="#40d0c0"/><stop offset="0.850" stop-color="#3030e0"/></linearGradient><linearGradient id="g44" x1="0" y1="0" x2="1" y2="1"><stop offset="0.150" stop-color="#50d0f0"/><stop offset="0.850" stop-color="#9070e0"/></linearGradient><linearGradient id="g45" x1="0" y1="0" x2="1" y2="1"><stop offset="0.150" stop-color="#e090d0"/><stop offset="0.850" stop-color="#6040d0"/></linearGradient><linearGradient id="g46" x1="0" y1="0" x2="1" y2="1"><stop offset="0.150" stop-color="#9090e0"/><stop offset="0.850" stop-color="#c080f0"/></linearGradient><linearGradient id="g47" x1="0" y1="0" x2="1" y2="1"><stop offset="0.150" stop-color="#f07080"/><stop offset="0.850" stop-color="#6070f0"/></linearGradient><linearGradient id="g48" x1="0" y1="0" x2="1" y2="1"><stop offset="0.150" stop-color="#9090d0"/><stop offset="0.850" stop-color="#6060c0"/></linearGradient><linearGradient id="g49" x1="0" y1="0" x2="1" y2="1"><stop offset="0.150" stop-color="#a0a0d0"/><stop offset="0.850" stop-color="#5060b0"/></linearGradient><linearGradient id="g50" x1="0" y1="0" x2="1" y2="1"><stop offset="0.150" stop-color="#e04080"/><stop offset="0.850" stop-color="#4040d0"/></linearGradient><linearGradient id="g51" x1="0" y1="0" x2="1" y2="1"><stop offset="0.150" stop-color="#d03080"/><stop offset="0.850" stop-color="#4050c0"/></linearGradient><linearGradient id="g52" x1="0" y1="0" x2="1" y2="1"><stop offset="0.150" stop-color="#e01060"/><stop offset="0.850" stop-color="#401070"/></linearGradient><linearGradient id="g53" x1="0" y1="0" x2="1" y2="1"><stop offset="0.150" stop-color="#c02080"/><stop offset="0.850" stop-color="#6020c0"/></linearGradient><linearGradient id="g54" x1="0" y1="0" x2="1" y2="1"><stop offset="0.100" stop-color="#f0c0d0"/><stop offset="0.500" stop-color="#f09030"/><stop offset="0.900" stop-color="#102060"/></linearGradient><linearGradient id="g55" x1="0" y1="0" x2="1" y2="1"><stop offset="0.150" stop-color="#f0a060"/><stop offset="0.850" stop-color="#4040c0"/></linearGradient><linearGradient id="g56" x1="0" y1="0" x2="1" y2="1"><stop offset="0.150" stop-color="#f0c0a0"/><stop offset="0.850" stop-color="#4050e0"/></linearGradient><linearGradient id="g57" x1="0" y1="0" x2="1" y2="1"><stop offset="0.150" stop-color="#f8d0e8"/><stop offset="0.850" stop-color="#f0c0a0"/></linearGradient><linearGradient id="g58" x1="0" y1="0" x2="1" y2="1"><stop offset="0.150" stop-color="#f8d0f0"/><stop offset="0.850" stop-color="#f8d0e8"/></linearGradient><linearGradient id="g59" x1="0" y1="0" x2="1" y2="1"><stop offset="0.150" stop-color="#fff0f0"/><stop offset="0.850" stop-color="#f8a090"/></linearGradient><linearGradient id="g60" x1="0" y1="0" x2="1" y2="1"><stop offset="0.150" stop-color="#f8c0b0"/><stop offset="0.850" stop-color="#f0a0b0"/></linearGradient><linearGradient id="g61" x1="0" y1="0" x2="1" y2="1"><stop offset="0.150" stop-color="#f8d0b0"/><stop offset="0.850" stop-color="#f0b0d0"/></linearGradient><linearGradient id="g62" x1="0" y1="0" x2="1" y2="1"><stop offset="0.150" stop-color="#f8c0a0"/><stop offset="0.850" stop-color="#d080e0"/></linearGradient><linearGradient id="g63" x1="0" y1="0" x2="1" y2="1"><stop offset="0.150" stop-color="#f8c0c0"/><stop offset="0.850" stop-color="#f0a0b0"/></linearGradient><linearGradient id="g64" x1="0" y1="0" x2="1" y2="1"><stop offset="0.150" stop-color="#f8b0b0"/><stop offset="0.850" stop-color="#f0c0c0"/></linearGradient><linearGradient id="g65" x1="0" y1="0" x2="1" y2="1"><stop offset="0.150" stop-color="#f8a0a0"/><stop offset="0.850" stop-color="#f8d0f0"/></linearGradient><linearGradient id="g66" x1="0" y1="0" x2="1" y2="1"><stop offset="0.150" stop-color="#f07090"/><stop offset="0.850" stop-color="#f06080"/></linearGradient><linearGradient id="g67" x1="0" y1="0" x2="1" y2="1"><stop offset="0.150" stop-color="#f08090"/><stop offset="0.850" stop-color="#f07060"/></linearGradient><linearGradient id="g68" x1="0" y1="0" x2="1" y2="1"><stop offset="0.150" stop-color="#f07090"/><stop offset="0.850" stop-color="#f07040"/></linearGradient><linearGradient id="g69" x1="0" y1="0" x2="1" y2="1"><stop offset="0.150" stop-color="#e05070"/><stop offset="0.850" stop-color="#f07060"/></linearGradient><linearGradient id="g70" x1="0" y1="0" x2="1" y2="1"><stop offset="0.150" stop-color="#e070e0"/><stop offset="0.850" stop-color="#f060a0"/></linearGradient><linearGradient id="g71" x1="0" y1="0" x2="1" y2="1"><stop offset="0.150" stop-color="#c060e0"/><stop offset="0.850" stop-color="#f070c0"/></linearGradient><linearGradient id="g72" x1="0" y1="0" x2="1" y2="1"><stop offset="0.150" stop-color="#6040d0"/><stop offset="0.850" stop-color="#f070e0"/></linearGradient><linearGradient id="g73" x1="0" y1="0" x2="1" y2="1"><stop offset="0.150" stop-color="#c0e8f8"/><stop offset="0.850" stop-color="#e01080"/></linearGradient><linearGradient id="g74" x1="0" y1="0" x2="1" y2="1"><stop offset="0.100" stop-color="#f04060"/><stop offset="0.500" stop-color="#f04060"/><stop offset="0.900" stop-color="#101010"/></linearGradient><linearGradient id="g75" x1="0" y1="0" x2="1" y2="1"><stop offset="0.150" stop-color="#c07070"/><stop offset="0.850" stop-color="#c02080"/></linearGradient><linearGradient id="g76" x1="0" y1="0" x2="1" y2="1"><stop offset="0.150" stop-color="#f07060"/><stop offset="0.850" stop-color="#c03060"/></linearGradient><linearGradient id="g77" x1="0" y1="0" x2="1" y2="1"><stop offset="0.150" stop-color="#a03060"/><stop offset="0.850" stop-color="#e04080"/></linearGradient><linearGradient id="g78" x1="0" y1="0" x2="1" y2="1"><stop offset="0.150" stop-color="#d02080"/><stop offset="0.850" stop-color="#f02060"/></linearGradient><linearGradient id="g79" x1="0" y1="0" x2="1" y2="1"><stop offset="0.150" stop-color="#f03040"/><stop offset="0.850" stop-color="#3030a0"/></linearGradient><linearGradient id="g80" x1="0" y1="0" x2="1" y2="1"><stop offset="0.100" stop-color="#f09030"/><stop offset="0.500" stop-color="#f02060"/><stop offset="0.900" stop-color="#102060"/></linearGradient><linearGradient id="g81" x1="0" y1="0" x2="1" y2="1"><stop offset="0.150" stop-color="#fff0d0"/><stop offset="0.850" stop-color="#f8a0a0"/></linearGradient><linearGradient id="g82" x1="0" y1="0" x2="1" y2="1"><stop offset="0.150" stop-color="#f8c080"/><stop offset="0.850" stop-color="#f8a070"/></linearGradient><linearGradient id="g83" x1="0" y1="0" x2="1" y2="1"><stop offset="0.150" stop-color="#f8c040"/><stop offset="0.850" stop-color="#f07080"/></linearGradient><linearGradient id="g84" x1="0" y1="0" x2="1" y2="1"><stop offset="0.150" stop-color="#f07080"/><stop offset="0.850" stop-color="#f00030"/></linearGradient><linearGradient id="g85" x1="0" y1="0" x2="1" y2="1"><stop offset="0.150" stop-color="#f8c020"/><stop offset="0.850" stop-color="#f04000"/></linearGradient><linearGradient id="g86" x1="0" y1="0" x2="1" y2="1"><stop offset="0.150" stop-color="#f87050"/><stop offset="0.850" stop-color="#f86070"/></linearGradient><linearGradient id="g87" x1="0" y1="0" x2="1" y2="1"><stop offset="0.150" stop-color="#f8c0b0"/><stop offset="0.850" stop-color="#f8b0b0"/></linearGradient><linearGradient id="g88" x1="0" y1="0" x2="1" y2="1"><stop offset="0.150" stop-color="#f07090"/><stop offset="0.850" stop-color="#f8a0a0"/></linearGradient><linearGradient id="g89" x1="0" y1="0" x2="1" y2="1"><stop offset="0.150" stop-color="#f88050"/><stop offset="0.850" stop-color="#f06070"/></linearGradient><linearGradient id="g90" x1="0" y1="0" x2="1" y2="1"><stop offset="0.150" stop-color="#f8c020"/><stop offset="0.850" stop-color="#f03060"/></linearGradient><linearGradient id="g91" x1="0" y1="0" x2="1" y2="1"><stop offset="0.150" stop-color="#f07080"/><stop offset="0.850" stop-color="#f890a0"/></linearGradient><linearGradient id="g92" x1="0" y1="0" x2="1" y2="1"><stop offset="0.150" stop-color="#f0f0a0"/><stop offset="0.850" stop-color="#c060e0"/></linearGradient><linearGradient id="g93" x1="0" y1="0" x2="1" y2="1"><stop offset="0.150" stop-color="#f8c0a0"/><stop offset="0.850" stop-color="#f07090"/></linearGradient><linearGradient id="g94" x1="0" y1="0" x2="1" y2="1"><stop offset="0.150" stop-color="#70f0e0"/><stop offset="0.850" stop-color="#50b0e8"/></linearGradient><linearGradient id="g95" x1="0" y1="0" x2="1" y2="1"><stop offset="0.150" stop-color="#40e890"/><stop offset="0.850" stop-color="#40d8c0"/></linearGradient><linearGradient id="g96" x1="0" y1="0" x2="1" y2="1"><stop offset="0.150" stop-color="#40f0f0"/><stop offset="0.850" stop-color="#90e8c0"/></linearGradient><linearGradient id="g97" x1="0" y1="0" x2="1" y2="1"><stop offset="0.150" stop-color="#b0f0c0"/><stop offset="0.850" stop-color="#40c890"/></linearGradient><linearGradient id="g98" x1="0" y1="0" x2="1" y2="1"><stop offset="0.150" stop-color="#60d8d8"/><stop offset="0.850" stop-color="#c0f0a0"/></linearGradient><linearGradient id="g99" x1="0" y1="0" x2="1" y2="1"><stop offset="0.150" stop-color="#90e8d0"/><stop offset="0.850" stop-color="#80c8e8"/></linearGradient><linearGradient id="g100" x1="0" y1="0" x2="1" y2="1"><stop offset="0.150" stop-color="#a0f0e8"/><stop offset="0.850" stop-color="#40a8e8"/></linearGradient><linearGradient id="g101" x1="0" y1="0" x2="1" y2="1"><stop offset="0.150" stop-color="#80f0c0"/><stop offset="0.850" stop-color="#40c8f0"/></linearGradient><linearGradient id="g102" x1="0" y1="0" x2="1" y2="1"><stop offset="0.150" stop-color="#40e8b0"/><stop offset="0.850" stop-color="#4090f0"/></linearGradient><linearGradient id="g103" x1="0" y1="0" x2="1" y2="1"><stop offset="0.150" stop-color="#c8e8d8"/><stop offset="0.850" stop-color="#e0f0e0"/></linearGradient><linearGradient id="g104" x1="0" y1="0" x2="1" y2="1"><stop offset="0.150" stop-color="#c0f0c0"/><stop offset="0.850" stop-color="#f0f0a0"/></linearGradient><linearGradient id="g105" x1="0" y1="0" x2="1" y2="1"><stop offset="0.150" stop-color="#c0f0c0"/><stop offset="0.850" stop-color="#f0f080"/></linearGradient><linearGradient id="g106" x1="0" y1="0" x2="1" y2="1"><stop offset="0.150" stop-color="#f0f080"/><stop offset="0.850" stop-color="#a0e080"/></linearGradient><linearGradient id="g107" x1="0" y1="0" x2="1" y2="1"><stop offset="0.150" stop-color="#80e060"/><stop offset="0.850" stop-color="#40d0a0"/></linearGradient><linearGradient id="g108" x1="0" y1="0" x2="1" y2="1"><stop offset="0.150" stop-color="#f0f040"/><stop offset="0.850" stop-color="#20c040"/></linearGradient><linearGradient id="g109" x1="0" y1="0" x2="1" y2="1"><stop offset="0.150" stop-color="#60d080"/><stop offset="0.850" stop-color="#e0f080"/></linearGradient><linearGradient id="g110" x1="0" y1="0" x2="1" y2="1"><stop offset="0.150" stop-color="#d0d090"/><stop offset="0.850" stop-color="#c0c0a0"/></linearGradient><linearGradient id="g111" x1="0" y1="0" x2="1" y2="1"><stop offset="0.150" stop-color="#e0b040"/><stop offset="0.850" stop-color="#40c0a0"/></linearGradient><linearGradient id="g112" x1="0" y1="0" x2="1" y2="1"><stop offset="0.150" stop-color="#30a060"/><stop offset="0.850" stop-color="#40b080"/></linearGradient><linearGradient id="g113" x1="0" y1="0" x2="1" y2="1"><stop offset="0.150" stop-color="#50d0c0"/><stop offset="0.850" stop-color="#40c0d0"/></linearGradient><linearGradient id="g114" x1="0" y1="0" x2="1" y2="1"><stop offset="0.150" stop-color="#60a0e0"/><stop offset="0.850" stop-color="#a0e0c0"/></linearGradient><linearGradient id="g115" x1="0" y1="0" x2="1" y2="1"><stop offset="0.150" stop-color="#60c0d0"/><stop offset="0.850" stop-color="#80d0e0"/></linearGradient><linearGradient id="g116" x1="0" y1="0" x2="1" y2="1"><stop offset="0.150" stop-color="#a0e0f0"/><stop offset="0.850" stop-color="#40a0c0"/></linearGradient><linearGradient id="g117" x1="0" y1="0" x2="1" y2="1"><stop offset="0.150" stop-color="#40e0c0"/><stop offset="0.850" stop-color="#4090d0"/></linearGradient><linearGradient id="g118" x1="0" y1="0" x2="1" y2="1"><stop offset="0.150" stop-color="#80e0d0"/><stop offset="0.850" stop-color="#a0a0f0"/></linearGradient><linearGradient id="g119" x1="0" y1="0" x2="1" y2="1"><stop offset="0.150" stop-color="#40e0c0"/><stop offset="0.850" stop-color="#4060d0"/></linearGradient><linearGradient id="g120" x1="0" y1="0" x2="1" y2="1"><stop offset="0.150" stop-color="#5030b0"/><stop offset="0.850" stop-color="#40d0c0"/></linearGradient><linearGradient id="g121" x1="0" y1="0" x2="1" y2="1"><stop offset="0.150" stop-color="#40a0c0"/><stop offset="0.850" stop-color="#304890"/></linearGradient><linearGradient id="g122" x1="0" y1="0" x2="1" y2="1"><stop offset="0.150" stop-color="#404090"/><stop offset="0.850" stop-color="#50a0c0"/></linearGradient><linearGradient id="g123" x1="0" y1="0" x2="1" y2="1"><stop offset="0.150" stop-color="#a0a0a0"/><stop offset="0.850" stop-color="#404040"/></linearGradient><linearGradient id="g124" x1="0" y1="0" x2="1" y2="1"><stop offset="0.150" stop-color="#50b090"/><stop offset="0.850" stop-color="#101010"/></linearGradient><linearGradient id="g125" x1="0" y1="0" x2="1" y2="1"><stop offset="0.100" stop-color="#d8d8d8"/><stop offset="0.500" stop-color="#ffffff"/><stop offset="0.900" stop-color="#c8c8c8"/></linearGradient><linearGradient id="g126" x1="0" y1="0" x2="1" y2="1"><stop offset="0.150" stop-color="#e0e0e0"/><stop offset="0.850" stop-color="#f0f0f0"/></linearGradient><linearGradient id="g127" x1="0" y1="0" x2="1" y2="1"><stop offset="0.100" stop-color="#b0b0b0"/><stop offset="0.500" stop-color="#f0f0f0"/><stop offset="0.900" stop-color="#d0d0d0"/></linearGradient><linearGradient id="g128" x1="0" y1="0" x2="1" y2="1"><stop offset="0.150" stop-color="#e8e8e8"/><stop offset="0.850" stop-color="#d0d0d0"/></linearGradient><linearGradient id="g129" x1="0" y1="0" x2="1" y2="1"><stop offset="0.150" stop-color="#e0e0e0"/><stop offset="0.850" stop-color="#c8c8c8"/></linearGradient><linearGradient id="g130" x1="0" y1="0" x2="1" y2="1"><stop offset="0.150" stop-color="#c0c8d8"/><stop offset="0.850" stop-color="#c8d0e0"/></linearGradient><linearGradient id="g131" x1="0" y1="0" x2="1" y2="1"><stop offset="0.150" stop-color="#f0f0f0"/><stop offset="0.850" stop-color="#b0b0b0"/></linearGradient><linearGradient id="g132" x1="0" y1="0" x2="1" y2="1"><stop offset="0.150" stop-color="#c8c8c8"/><stop offset="0.850" stop-color="#e0e0e0"/></linearGradient><linearGradient id="g133" x1="0" y1="0" x2="1" y2="1"><stop offset="0.150" stop-color="#d0d0d0"/><stop offset="0.850" stop-color="#202020"/></linearGradient><linearGradient id="g134" x1="0" y1="0" x2="1" y2="1"><stop offset="0.150" stop-color="#808080"/><stop offset="0.850" stop-color="#505050"/></linearGradient><linearGradient id="g135" x1="0" y1="0" x2="1" y2="1"><stop offset="0.150" stop-color="#909090"/><stop offset="0.850" stop-color="#606060"/></linearGradient><linearGradient id="g136" x1="0" y1="0" x2="1" y2="1"><stop offset="0.150" stop-color="#303840"/><stop offset="0.850" stop-color="#404850"/></linearGradient><linearGradient id="g137" x1="0" y1="0" x2="1" y2="1"><stop offset="0.150" stop-color="#282e38"/><stop offset="0.850" stop-color="#384048"/></linearGradient><linearGradient id="g138" x1="0" y1="0" x2="1" y2="1"><stop offset="0.150" stop-color="#404040"/><stop offset="0.850" stop-color="#000000"/></linearGradient><linearGradient id="g139" x1="0" y1="0" x2="1" y2="1"><stop offset="0.150" stop-color="#e0f8f8"/><stop offset="0.850" stop-color="#f8f8ff"/></linearGradient><linearGradient id="g140" x1="0" y1="0" x2="1" y2="1"><stop offset="0.150" stop-color="#f8f8f8"/><stop offset="0.850" stop-color="#e0e0e0"/></linearGradient><linearGradient id="g141" x1="0" y1="0" x2="1" y2="1"><stop offset="0.150" stop-color="#e8ecf0"/><stop offset="0.850" stop-color="#f0f0f4"/></linearGradient><linearGradient id="g142" x1="0" y1="0" x2="1" y2="1"><stop offset="0.150" stop-color="#d8ecf8"/><stop offset="0.850" stop-color="#f8f8f8"/></linearGradient><linearGradient id="g143" x1="0" y1="0" x2="1" y2="1"><stop offset="0.150" stop-color="#c8d8e8"/><stop offset="0.850" stop-color="#e0e8f0"/></linearGradient><linearGradient id="g144" x1="0" y1="0" x2="1" y2="1"><stop offset="0.150" stop-color="#f0f0f8"/><stop offset="0.850" stop-color="#b0b8d8"/></linearGradient><linearGradient id="g145" x1="0" y1="0" x2="1" y2="1"><stop offset="0.150" stop-color="#d0e0f0"/><stop offset="0.850" stop-color="#e0e8f0"/></linearGradient><linearGradient id="g146" x1="0" y1="0" x2="1" y2="1"><stop offset="0.150" stop-color="#d0e8e8"/><stop offset="0.850" stop-color="#e8f0f0"/></linearGradient><linearGradient id="g147" x1="0" y1="0" x2="1" y2="1"><stop offset="0.150" stop-color="#fff0d0"/><stop offset="0.850" stop-color="#f0e0f0"/></linearGradient><linearGradient id="g148" x1="0" y1="0" x2="1" y2="1"><stop offset="0.150" stop-color="#e0f0ff"/><stop offset="0.850" stop-color="#f0e8f0"/></linearGradient><linearGradient id="g149" x1="0" y1="0" x2="1" y2="1"><stop offset="0.150" stop-color="#e8ffff"/><stop offset="0.850" stop-color="#f0f0f0"/></linearGradient><linearGradient id="g150" x1="0" y1="0" x2="1" y2="1"><stop offset="0.150" stop-color="#a0d8f0"/><stop offset="0.850" stop-color="#f0e8d0"/></linearGradient><linearGradient id="g151" x1="0" y1="0" x2="1" y2="1"><stop offset="0.150" stop-color="#f0c0e0"/><stop offset="0.850" stop-color="#80e0e0"/></linearGradient><linearGradient id="g152" x1="0" y1="0" x2="1" y2="1"><stop offset="0.150" stop-color="#f0e0f0"/><stop offset="0.850" stop-color="#c0c0e8"/></linearGradient><linearGradient id="g153" x1="0" y1="0" x2="1" y2="1"><stop offset="0.150" stop-color="#f8f0b0"/><stop offset="0.850" stop-color="#e080d0"/></linearGradient><linearGradient id="g154" x1="0" y1="0" x2="1" y2="1"><stop offset="0.150" stop-color="#e0e0f0"/><stop offset="0.850" stop-color="#c0a0e0"/></linearGradient><linearGradient id="g155" x1="0" y1="0" x2="1" y2="1"><stop offset="0.150" stop-color="#a0d0f0"/><stop offset="0.850" stop-color="#c080e0"/></linearGradient><linearGradient id="g156" x1="0" y1="0" x2="1" y2="1"><stop offset="0.150" stop-color="#60d0e0"/><stop offset="0.850" stop-color="#e0a0d0"/></linearGradient><linearGradient id="g157" x1="0" y1="0" x2="1" y2="1"><stop offset="0.150" stop-color="#40c0f0"/><stop offset="0.850" stop-color="#d0a0f0"/></linearGradient><linearGradient id="g158" x1="0" y1="0" x2="1" y2="1"><stop offset="0.150" stop-color="#8070e0"/><stop offset="0.850" stop-color="#80e0c0"/></linearGradient><linearGradient id="g159" x1="0" y1="0" x2="1" y2="1"><stop offset="0.150" stop-color="#a0e0a0"/><stop offset="0.850" stop-color="#8090e0"/></linearGradient><linearGradient id="g160" x1="0" y1="0" x2="1" y2="1"><stop offset="0.150" stop-color="#80e0f0"/><stop offset="0.850" stop-color="#a080e0"/></linearGradient><linearGradient id="g161" x1="0" y1="0" x2="1" y2="1"><stop offset="0.150" stop-color="#f08090"/><stop offset="0.850" stop-color="#80a0f0"/></linearGradient><linearGradient id="g162" x1="0" y1="0" x2="1" y2="1"><stop offset="0.150" stop-color="#a0c0a0"/><stop offset="0.850" stop-color="#a0a0d0"/></linearGradient><linearGradient id="g163" x1="0" y1="0" x2="1" y2="1"><stop offset="0.150" stop-color="#e0c080"/><stop offset="0.850" stop-color="#80d0e0"/></linearGradient><linearGradient id="g164" x1="0" y1="0" x2="1" y2="1"><stop offset="0.150" stop-color="#c0f8c0"/><stop offset="0.850" stop-color="#f8a0b0"/></linearGradient><linearGradient id="g165" x1="0" y1="0" x2="1" y2="1"><stop offset="0.150" stop-color="#e0fff8"/><stop offset="0.850" stop-color="#f8d090"/></linearGradient><linearGradient id="g166" x1="0" y1="0" x2="1" y2="1"><stop offset="0.150" stop-color="#20c070"/><stop offset="0.850" stop-color="#c040f0"/></linearGradient><linearGradient id="g167" x1="0" y1="0" x2="1" y2="1"><stop offset="0.150" stop-color="#909090"/><stop offset="0.850" stop-color="#a0a0a0"/></linearGradient><linearGradient id="g168" x1="0" y1="0" x2="1" y2="1"><stop offset="0.150" stop-color="#60b090"/><stop offset="0.850" stop-color="#101010"/></linearGradient><linearGradient id="g169" x1="0" y1="0" x2="1" y2="1"><stop offset="0.150" stop-color="#8080d0"/><stop offset="0.850" stop-color="#a0a0e0"/></linearGradient><linearGradient id="g170" x1="0" y1="0" x2="1" y2="1"><stop offset="0.150" stop-color="#e0e0e0"/><stop offset="0.850" stop-color="#d0d0d0"/></linearGradient><linearGradient id="g171" x1="0" y1="0" x2="1" y2="1"><stop offset="0.150" stop-color="#f0a0d0"/><stop offset="0.850" stop-color="#f0c0e0"/></linearGradient><linearGradient id="g172" x1="0" y1="0" x2="1" y2="1"><stop offset="0.150" stop-color="#c0a0f0"/><stop offset="0.850" stop-color="#d0b0f0"/></linearGradient><linearGradient id="g173" x1="0" y1="0" x2="1" y2="1"><stop offset="0.150" stop-color="#c0c0f0"/><stop offset="0.850" stop-color="#c0b0f0"/></linearGradient><linearGradient id="g174" x1="0" y1="0" x2="1" y2="1"><stop offset="0.150" stop-color="#b0b0f0"/><stop offset="0.850" stop-color="#a0c0f0"/></linearGradient><linearGradient id="g175" x1="0" y1="0" x2="1" y2="1"><stop offset="0.150" stop-color="#f0b0d0"/><stop offset="0.850" stop-color="#e0a0c0"/></linearGradient><linearGradient id="g176" x1="0" y1="0" x2="1" y2="1"><stop offset="0.150" stop-color="#e0a0e0"/><stop offset="0.850" stop-color="#f0b0d0"/></linearGradient><linearGradient id="g177" x1="0" y1="0" x2="1" y2="1"><stop offset="0.150" stop-color="#c0a0f0"/><stop offset="0.850" stop-color="#a0a0f0"/></linearGradient></defs><rect x="7.60" y="10.00" width="9.3" height="9.3" fill="url(#g0)"/><rect x="17.52" y="10.00" width="9.3" height="9.3" fill="url(#g1)"/><rect x="27.44" y="10.00" width="9.3" height="9.3" fill="url(#g2)"/><rect x="37.36" y="10.00" width="9.3" height="9.3" fill="url(#g3)"/><rect x="7.60" y="29.00" width="9.3" height="9.3" fill="url(#g4)"/><rect x="17.52" y="29.00" width="9.3" height="9.3" fill="url(#g5)"/><rect x="27.44" y="29.00" width="9.3" height="9.3" fill="url(#g6)"/><rect x="37.36" y="29.00" width="9.3" height="9.3" fill="url(#g7)"/><rect x="47.28" y="29.00" width="9.3" height="9.3" fill="url(#g8)"/><rect x="57.20" y="29.00" width="9.3" height="9.3" fill="url(#g9)"/><rect x="67.12" y="29.00" width="9.3" height="9.3" fill="url(#g10)"/><rect x="77.04" y="29.00" width="9.3" height="9.3" fill="url(#g11)"/><rect x="86.96" y="29.00" width="9.3" height="9.3" fill="url(#g12)"/><rect x="7.60" y="38.92" width="9.3" height="9.3" fill="url(#g13)"/><rect x="17.52" y="38.92" width="9.3" height="9.3" fill="url(#g14)"/><rect x="27.44" y="38.92" width="9.3" height="9.3" fill="url(#g15)"/><rect x="37.36" y="38.92" width="9.3" height="9.3" fill="url(#g16)"/><rect x="47.28" y="38.92" width="9.3" height="9.3" fill="url(#g17)"/><rect x="57.20" y="38.92" width="9.3" height="9.3" fill="url(#g18)"/><rect x="67.12" y="38.92" width="9.3" height="9.3" fill="url(#g19)"/><rect x="77.04" y="38.92" width="9.3" height="9.3" fill="url(#g20)"/><rect x="86.96" y="38.92" width="9.3" height="9.3" fill="url(#g21)"/><rect x="7.60" y="48.84" width="9.3" height="9.3" fill="url(#g22)"/><rect x="17.52" y="48.84" width="9.3" height="9.3" fill="url(#g23)"/><rect x="27.44" y="48.84" width="9.3" height="9.3" fill="url(#g24)"/><rect x="37.36" y="48.84" width="9.3" height="9.3" fill="url(#g25)"/><rect x="47.28" y="48.84" width="9.3" height="9.3" fill="url(#g26)"/><rect x="57.20" y="48.84" width="9.3" height="9.3" fill="url(#g27)"/><rect x="67.12" y="48.84" width="9.3" height="9.3" fill="url(#g28)"/><rect x="77.04" y="48.84" width="9.3" height="9.3" fill="url(#g29)"/><rect x="86.96" y="48.84" width="9.3" height="9.3" fill="url(#g30)"/><rect x="7.60" y="58.76" width="9.3" height="9.3" fill="url(#g31)"/><rect x="17.52" y="58.76" width="9.3" height="9.3" fill="url(#g32)"/><rect x="27.44" y="58.76" width="9.3" height="9.3" fill="url(#g33)"/><rect x="7.60" y="78.00" width="9.3" height="9.3" fill="url(#g34)"/><rect x="17.52" y="78.00" width="9.3" height="9.3" fill="url(#g35)"/><rect x="27.44" y="78.00" width="9.3" height="9.3" fill="url(#g36)"/><rect x="37.36" y="78.00" width="9.3" height="9.3" fill="url(#g37)"/><rect x="47.28" y="78.00" width="9.3" height="9.3" fill="url(#g38)"/><rect x="57.20" y="78.00" width="9.3" height="9.3" fill="url(#g39)"/><rect x="67.12" y="78.00" width="9.3" height="9.3" fill="url(#g40)"/><rect x="77.04" y="78.00" width="9.3" height="9.3" fill="url(#g41)"/><rect x="86.96" y="78.00" width="9.3" height="9.3" fill="url(#g42)"/><rect x="7.60" y="87.92" width="9.3" height="9.3" fill="url(#g43)"/><rect x="17.52" y="87.92" width="9.3" height="9.3" fill="url(#g44)"/><rect x="27.44" y="87.92" width="9.3" height="9.3" fill="url(#g45)"/><rect x="37.36" y="87.92" width="9.3" height="9.3" fill="url(#g46)"/><rect x="47.28" y="87.92" width="9.3" height="9.3" fill="url(#g47)"/><rect x="57.20" y="87.92" width="9.3" height="9.3" fill="url(#g48)"/><rect x="67.12" y="87.92" width="9.3" height="9.3" fill="url(#g49)"/><rect x="77.04" y="87.92" width="9.3" height="9.3" fill="url(#g50)"/><rect x="86.96" y="87.92" width="9.3" height="9.3" fill="url(#g51)"/><rect x="7.60" y="97.84" width="9.3" height="9.3" fill="url(#g52)"/><rect x="17.52" y="97.84" width="9.3" height="9.3" fill="url(#g53)"/><rect x="27.44" y="97.84" width="9.3" height="9.3" fill="url(#g54)"/><rect x="37.36" y="97.84" width="9.3" height="9.3" fill="url(#g55)"/><rect x="47.28" y="97.84" width="9.3" height="9.3" fill="url(#g56)"/><rect x="7.60" y="117.00" width="9.3" height="9.3" fill="url(#g57)"/><rect x="17.52" y="117.00" width="9.3" height="9.3" fill="url(#g58)"/><rect x="27.44" y="117.00" width="9.3" height="9.3" fill="url(#g59)"/><rect x="37.36" y="117.00" width="9.3" height="9.3" fill="url(#g60)"/><rect x="47.28" y="117.00" width="9.3" height="9.3" fill="url(#g61)"/><rect x="57.20" y="117.00" width="9.3" height="9.3" fill="url(#g62)"/><rect x="67.12" y="117.00" width="9.3" height="9.3" fill="url(#g63)"/><rect x="77.04" y="117.00" width="9.3" height="9.3" fill="url(#g64)"/><rect x="86.96" y="117.00" width="9.3" height="9.3" fill="url(#g65)"/><rect x="7.60" y="126.92" width="9.3" height="9.3" fill="url(#g66)"/><rect x="17.52" y="126.92" width="9.3" height="9.3" fill="url(#g67)"/><rect x="27.44" y="126.92" width="9.3" height="9.3" fill="url(#g68)"/><rect x="37.36" y="126.92" width="9.3" height="9.3" fill="url(#g69)"/><rect x="47.28" y="126.92" width="9.3" height="9.3" fill="url(#g70)"/><rect x="57.20" y="126.92" width="9.3" height="9.3" fill="url(#g71)"/><rect x="67.12" y="126.92" width="9.3" height="9.3" fill="url(#g72)"/><rect x="77.04" y="126.92" width="9.3" height="9.3" fill="url(#g73)"/><rect x="7.60" y="146.00" width="9.3" height="9.3" fill="url(#g74)"/><rect x="17.52" y="146.00" width="9.3" height="9.3" fill="url(#g75)"/><rect x="27.44" y="146.00" width="9.3" height="9.3" fill="url(#g76)"/><rect x="37.36" y="146.00" width="9.3" height="9.3" fill="url(#g77)"/><rect x="47.28" y="146.00" width="9.3" height="9.3" fill="url(#g78)"/><rect x="57.20" y="146.00" width="9.3" height="9.3" fill="url(#g79)"/><rect x="67.12" y="146.00" width="9.3" height="9.3" fill="url(#g80)"/><rect x="7.60" y="165.00" width="9.3" height="9.3" fill="url(#g81)"/><rect x="17.52" y="165.00" width="9.3" height="9.3" fill="url(#g82)"/><rect x="27.44" y="165.00" width="9.3" height="9.3" fill="url(#g83)"/><rect x="37.36" y="165.00" width="9.3" height="9.3" fill="url(#g84)"/><rect x="47.28" y="165.00" width="9.3" height="9.3" fill="url(#g85)"/><rect x="57.20" y="165.00" width="9.3" height="9.3" fill="url(#g86)"/><rect x="67.12" y="165.00" width="9.3" height="9.3" fill="url(#g87)"/><rect x="77.04" y="165.00" width="9.3" height="9.3" fill="url(#g88)"/><rect x="86.96" y="165.00" width="9.3" height="9.3" fill="url(#g89)"/><rect x="7.60" y="174.92" width="9.3" height="9.3" fill="url(#g90)"/><rect x="17.52" y="174.92" width="9.3" height="9.3" fill="url(#g91)"/><rect x="27.44" y="174.92" width="9.3" height="9.3" fill="url(#g92)"/><rect x="37.36" y="174.92" width="9.3" height="9.3" fill="url(#g93)"/><rect x="7.60" y="194.00" width="9.3" height="9.3" fill="url(#g94)"/><rect x="17.52" y="194.00" width="9.3" height="9.3" fill="url(#g95)"/><rect x="27.44" y="194.00" width="9.3" height="9.3" fill="url(#g96)"/><rect x="37.36" y="194.00" width="9.3" height="9.3" fill="url(#g97)"/><rect x="47.28" y="194.00" width="9.3" height="9.3" fill="url(#g98)"/><rect x="57.20" y="194.00" width="9.3" height="9.3" fill="url(#g99)"/><rect x="67.12" y="194.00" width="9.3" height="9.3" fill="url(#g100)"/><rect x="77.04" y="194.00" width="9.3" height="9.3" fill="url(#g101)"/><rect x="86.96" y="194.00" width="9.3" height="9.3" fill="url(#g102)"/><rect x="7.60" y="203.92" width="9.3" height="9.3" fill="url(#g103)"/><rect x="17.52" y="203.92" width="9.3" height="9.3" fill="url(#g104)"/><rect x="27.44" y="203.92" width="9.3" height="9.3" fill="url(#g105)"/><rect x="37.36" y="203.92" width="9.3" height="9.3" fill="url(#g106)"/><rect x="47.28" y="203.92" width="9.3" height="9.3" fill="url(#g107)"/><rect x="57.20" y="203.92" width="9.3" height="9.3" fill="url(#g108)"/><rect x="67.12" y="203.92" width="9.3" height="9.3" fill="url(#g109)"/><rect x="77.04" y="203.92" width="9.3" height="9.3" fill="url(#g110)"/><rect x="86.96" y="203.92" width="9.3" height="9.3" fill="url(#g111)"/><rect x="7.60" y="213.84" width="9.3" height="9.3" fill="url(#g112)"/><rect x="17.52" y="213.84" width="9.3" height="9.3" fill="url(#g113)"/><rect x="27.44" y="213.84" width="9.3" height="9.3" fill="url(#g114)"/><rect x="37.36" y="213.84" width="9.3" height="9.3" fill="url(#g115)"/><rect x="47.28" y="213.84" width="9.3" height="9.3" fill="url(#g116)"/><rect x="57.20" y="213.84" width="9.3" height="9.3" fill="url(#g117)"/><rect x="67.12" y="213.84" width="9.3" height="9.3" fill="url(#g118)"/><rect x="77.04" y="213.84" width="9.3" height="9.3" fill="url(#g119)"/><rect x="86.96" y="213.84" width="9.3" height="9.3" fill="url(#g120)"/><rect x="7.60" y="223.76" width="9.3" height="9.3" fill="url(#g121)"/><rect x="17.52" y="223.76" width="9.3" height="9.3" fill="url(#g122)"/><rect x="27.44" y="223.76" width="9.3" height="9.3" fill="url(#g123)"/><rect x="37.36" y="223.76" width="9.3" height="9.3" fill="url(#g124)"/><rect x="7.60" y="243.00" width="9.3" height="9.3" fill="url(#g125)"/><rect x="17.52" y="243.00" width="9.3" height="9.3" fill="url(#g126)"/><rect x="27.44" y="243.00" width="9.3" height="9.3" fill="url(#g127)"/><rect x="37.36" y="243.00" width="9.3" height="9.3" fill="url(#g128)"/><rect x="47.28" y="243.00" width="9.3" height="9.3" fill="url(#g129)"/><rect x="57.20" y="243.00" width="9.3" height="9.3" fill="url(#g130)"/><rect x="67.12" y="243.00" width="9.3" height="9.3" fill="url(#g131)"/><rect x="77.04" y="243.00" width="9.3" height="9.3" fill="url(#g132)"/><rect x="86.96" y="243.00" width="9.3" height="9.3" fill="url(#g133)"/><rect x="7.60" y="252.92" width="9.3" height="9.3" fill="url(#g134)"/><rect x="17.52" y="252.92" width="9.3" height="9.3" fill="url(#g135)"/><rect x="27.44" y="252.92" width="9.3" height="9.3" fill="url(#g136)"/><rect x="37.36" y="252.92" width="9.3" height="9.3" fill="url(#g137)"/><rect x="47.28" y="252.92" width="9.3" height="9.3" fill="url(#g138)"/><rect x="7.60" y="272.00" width="9.3" height="9.3" fill="url(#g139)"/><rect x="17.52" y="272.00" width="9.3" height="9.3" fill="url(#g140)"/><rect x="27.44" y="272.00" width="9.3" height="9.3" fill="url(#g141)"/><rect x="37.36" y="272.00" width="9.3" height="9.3" fill="url(#g142)"/><rect x="47.28" y="272.00" width="9.3" height="9.3" fill="url(#g143)"/><rect x="57.20" y="272.00" width="9.3" height="9.3" fill="url(#g144)"/><rect x="67.12" y="272.00" width="9.3" height="9.3" fill="url(#g145)"/><rect x="77.04" y="272.00" width="9.3" height="9.3" fill="url(#g146)"/><rect x="7.60" y="291.00" width="9.3" height="9.3" fill="url(#g147)"/><rect x="17.52" y="291.00" width="9.3" height="9.3" fill="url(#g148)"/><rect x="27.44" y="291.00" width="9.3" height="9.3" fill="url(#g149)"/><rect x="37.36" y="291.00" width="9.3" height="9.3" fill="url(#g150)"/><rect x="47.28" y="291.00" width="9.3" height="9.3" fill="url(#g151)"/><rect x="57.20" y="291.00" width="9.3" height="9.3" fill="url(#g152)"/><rect x="67.12" y="291.00" width="9.3" height="9.3" fill="url(#g153)"/><rect x="77.04" y="291.00" width="9.3" height="9.3" fill="url(#g154)"/><rect x="86.96" y="291.00" width="9.3" height="9.3" fill="url(#g155)"/><rect x="7.60" y="300.92" width="9.3" height="9.3" fill="url(#g156)"/><rect x="17.52" y="300.92" width="9.3" height="9.3" fill="url(#g157)"/><rect x="27.44" y="300.92" width="9.3" height="9.3" fill="url(#g158)"/><rect x="37.36" y="300.92" width="9.3" height="9.3" fill="url(#g159)"/><rect x="47.28" y="300.92" width="9.3" height="9.3" fill="url(#g160)"/><rect x="57.20" y="300.92" width="9.3" height="9.3" fill="url(#g161)"/><rect x="67.12" y="300.92" width="9.3" height="9.3" fill="url(#g162)"/><rect x="77.04" y="300.92" width="9.3" height="9.3" fill="url(#g163)"/><rect x="86.96" y="300.92" width="9.3" height="9.3" fill="url(#g164)"/><rect x="7.60" y="310.84" width="9.3" height="9.3" fill="url(#g165)"/><rect x="17.52" y="310.84" width="9.3" height="9.3" fill="url(#g166)"/><rect x="27.44" y="310.84" width="9.3" height="9.3" fill="url(#g167)"/><rect x="37.36" y="310.84" width="9.3" height="9.3" fill="url(#g168)"/><rect x="7.60" y="330.00" width="9.3" height="9.3" fill="url(#g169)"/><rect x="17.52" y="330.00" width="9.3" height="9.3" fill="url(#g170)"/><rect x="27.44" y="330.00" width="9.3" height="9.3" fill="url(#g171)"/><rect x="37.36" y="330.00" width="9.3" height="9.3" fill="url(#g172)"/><rect x="47.28" y="330.00" width="9.3" height="9.3" fill="url(#g173)"/><rect x="57.20" y="330.00" width="9.3" height="9.3" fill="url(#g174)"/><rect x="67.12" y="330.00" width="9.3" height="9.3" fill="url(#g175)"/><rect x="77.04" y="330.00" width="9.3" height="9.3" fill="url(#g176)"/><rect x="86.96" y="330.00" width="9.3" height="9.3" fill="url(#g177)"/></svg>
</div>
<div class="ab" style="left:499.5px;top:376px;width:99px;height:6px;background:#f0f0f0"></div>
<div class="ab" style="left:598.3px;top:43px;width:5px;height:333px;background:#e6e6e6"></div>
<div class="ab" style="left:598.7px;top:44.2px;width:3px;height:306.8px;background:#bcbcbc;border-radius:1.5px"></div>
<svg class="ic" style="left:573.00px;top:377.20px" width="4.00" height="3.50" viewBox="0 0 10 10" ><path d="M0.6 0.6H4L5 1.8H9.4V7.4H0.6Z" fill="none" stroke="#555" stroke-width="1.2"/></svg>
<svg class="ic" style="left:582.00px;top:377.20px" width="4.00" height="3.50" viewBox="0 0 10 10" ><rect x="1" y="1" width="8" height="8" fill="none" stroke="#555" stroke-width="1.2"/><path d="M5 3V7M3 5H7" stroke="#555"/></svg>
<svg class="ic" style="left:590.50px;top:377.20px" width="4.00" height="3.50" viewBox="0 0 10 10" ><path d="M2 3H8L7.5 9.5H2.5ZM1 2H9M4 1H6" fill="none" stroke="#555" stroke-width="1.2"/></svg>
<div class="ab" style="left:603.5px;top:23px;width:0.6px;height:359px;background:#d5d5d5"></div>
<div class="ab" style="left:604px;top:23.5px;width:89px;height:8.5px;background:#e3e3e3"></div>
<div class="ab" style="left:604px;top:24px;width:14px;height:8.5px;background:#f2f2f2"></div>
<div class="t" style="left:606.7px;top:26px;font-size:3.6px;color:#2a2a2a">Color</div>
<svg class="ic" style="left:688.50px;top:26.30px" width="3.00" height="2.40" viewBox="0 0 10 10" ><path d="M0 1H10M0 5H10M0 9H10" stroke="#777" stroke-width="1.6"/></svg>
<div class="ab" style="left:604px;top:32px;width:89px;height:53.5px;background:#f3f3f3"></div>
<div class="ab" style="left:610.2px;top:38.6px;width:5.8px;height:5.7px;background:#f00;box-shadow:0 0 0 0.4px #ddd"></div>
<div class="ab" style="left:607px;top:36px;width:5.5px;height:5.3px;background:#8b8bd0;box-shadow:0 0 0 0.4px #ccc"></div>
<div class="ab" style="left:618px;top:34.2px;width:59.6px;height:45px;background:linear-gradient(to bottom,rgba(0,0,0,0),rgba(0,0,0,0.28) 25%,rgba(0,0,0,0.54) 50%,rgba(0,0,0,0.78) 75%,#000),linear-gradient(to right,#fff,#b0a8f0 20%,#8080f0 40%,#4848e8 65%,#2020e8)"></div>
<svg class="ic" style="left:634.3px;top:43.3px" width="4.4" height="4.4" viewBox="0 0 10 10"><circle cx="5" cy="5" r="3.8" fill="none" stroke="#ddd" stroke-width="1.2"/></svg>
<div class="ab" style="left:682.7px;top:34.4px;width:6.3px;height:44.9px;background:linear-gradient(#f00 0%,#f0f 17%,#00f 33%,#0ff 50%,#0f0 67%,#ff0 83%,#f00 100%);box-shadow:0 0 0 1px #fbfbfb"></div>
<svg class="ic" style="left:679.60px;top:47.20px" width="2.00" height="2.60" viewBox="0 0 10 10" ><path d="M1 1L8 5L1 9Z" fill="none" stroke="#bbb" stroke-width="1.5"/></svg>
<div class="ab" style="left:604px;top:85.5px;width:89px;height:10.5px;background:#e3e3e3"></div>
<div class="ab" style="left:604px;top:86.5px;width:16.5px;height:9.5px;background:#f2f2f2"></div>
<div class="t" style="left:607px;top:88.1px;font-size:3.4px;color:#2a2a2a">Layers</div>
<div class="t" style="left:623px;top:88.1px;font-size:3.5px;color:#555">Channels</div>
<div class="t" style="left:643.5px;top:88.1px;font-size:3.4px;color:#555">Paths</div>
<svg class="ic" style="left:688.50px;top:89.60px" width="3.00" height="2.40" viewBox="0 0 10 10" ><path d="M0 1H10M0 5H10M0 9H10" stroke="#777" stroke-width="1.6"/></svg>
<div class="ab" style="left:604px;top:96px;width:89px;height:286px;background:#e9e8ea"></div>
<div class="ab" style="left:604px;top:96px;width:89px;height:26.5px;background:#f1f1f1"></div>
<div class="ab" style="left:606px;top:98px;width:27px;height:5px;background:#fafafa"></div>
<svg class="ic" style="left:607.00px;top:99.00px" width="3.20" height="3.20" viewBox="0 0 10 10" ><circle cx="4" cy="4" r="3" fill="none" stroke="#444" stroke-width="1.6"/><path d="M6.5 6.5L9.5 9.5" stroke="#444" stroke-width="1.8"/></svg>
<div class="t" style="left:611px;top:98.6px;font-size:3px;color:#555">Kind</div>
<svg class="ic" style="left:630.00px;top:100.00px" width="1.80" height="1.40" viewBox="0 0 10 10" ><path d="M0 2L5 8L10 2Z" fill="#777"/></svg>
<svg class="ic" style="left:636.00px;top:98.50px" width="4.00" height="4.00" viewBox="0 0 10 10" ><rect x="1" y="1" width="8" height="8" fill="none" stroke="#444" stroke-width="1.4"/><rect x="3" y="5" width="4" height="3" fill="#444"/></svg>
<svg class="ic" style="left:643.30px;top:98.50px" width="4.00" height="4.00" viewBox="0 0 10 10" ><circle cx="5" cy="5" r="4" fill="#333"/><path d="M5 1A4 4 0 0 1 5 9Z" fill="#fff"/></svg>
<svg class="ic" style="left:650.50px;top:98.50px" width="4.00" height="4.00" viewBox="0 0 10 10" ><path d="M1 1.5H9M5 1.5V9.5" stroke="#222" stroke-width="1.8"/></svg>
<svg class="ic" style="left:657.50px;top:98.50px" width="4.00" height="4.00" viewBox="0 0 10 10" ><path d="M1 1H4M1 1V4M9 1H6M9 1V4M1 9H4M1 9V6M9 9H6M9 9V6" stroke="#333" stroke-width="1.4" fill="none"/></svg>
<svg class="ic" style="left:664.50px;top:98.50px" width="4.00" height="4.00" viewBox="0 0 10 10" ><rect x="2" y="4" width="6" height="5" fill="#444"/><path d="M3 4V2.5A2 2 0 0 1 7 2.5V4" stroke="#444" fill="none"/></svg>
<div class="ab" style="left:674px;top:98px;width:1.8px;height:1.8px;border-radius:50%;background:#111"></div>
<div class="ab" style="left:605.5px;top:107.3px;width:39.5px;height:5.3px;background:#fafafa"></div>
<div class="t" style="left:607px;top:108.2px;font-size:3px;color:#555">Normal</div>
<svg class="ic" style="left:642.00px;top:109.40px" width="1.80" height="1.40" viewBox="0 0 10 10" ><path d="M0 2L5 8L10 2Z" fill="#777"/></svg>
<div class="t" style="left:647px;top:108.2px;font-size:3px;color:#666">Opacity:</div>
<div class="ab" style="left:659.8px;top:107.3px;width:15.5px;height:5.3px;background:#fafafa"></div>
<div class="t" style="left:661.5px;top:108.2px;font-size:3px;color:#555">100%</div>
<svg class="ic" style="left:672.80px;top:109.40px" width="1.80" height="1.40" viewBox="0 0 10 10" ><path d="M0 2L5 8L10 2Z" fill="#777"/></svg>
<div class="t" style="left:606.5px;top:116.2px;font-size:3px;color:#666">Lock:</div>
<svg class="ic" style="left:615.00px;top:115.80px" width="4.00" height="4.00" viewBox="0 0 10 10" ><rect x="1" y="1" width="8" height="8" fill="none" stroke="#777" stroke-width="1.2" stroke-dasharray="1.5 1"/></svg>
<svg class="ic" style="left:622.00px;top:115.80px" width="4.00" height="4.00" viewBox="0 0 10 10" ><path d="M1 9L9 1" stroke="#333" stroke-width="1.6"/></svg>
<svg class="ic" style="left:629.00px;top:115.80px" width="4.00" height="4.00" viewBox="0 0 10 10" ><path d="M5 0V10M0 5H10" stroke="#333" stroke-width="1.4"/></svg>
<svg class="ic" style="left:636.00px;top:115.80px" width="4.00" height="4.00" viewBox="0 0 10 10" ><rect x="1" y="1" width="8" height="8" fill="none" stroke="#333" stroke-width="1.2"/><path d="M3 8V3L7 8V3" stroke="#333" fill="none"/></svg>
<svg class="ic" style="left:643.00px;top:115.80px" width="4.00" height="4.00" viewBox="0 0 10 10" ><rect x="2" y="4" width="6" height="5" fill="#333"/><path d="M3 4V2.5A2 2 0 0 1 7 2.5V4" stroke="#333" fill="none"/></svg>
<div class="t" style="left:655.5px;top:116.2px;font-size:3px;color:#666">Fill:</div>
<div class="ab" style="left:660.5px;top:115.5px;width:14px;height:5px;background:#fafafa"></div>
<div class="t" y style="left:661.5px;top:116.2px;font-size:3px;color:#555">100%</div>
<svg class="ic" style="left:672.50px;top:117.40px" width="1.80" height="1.40" viewBox="0 0 10 10" ><path d="M0 2L5 8L10 2Z" fill="#777"/></svg>
<div class="ab" style="left:613.6px;top:122.5px;width:75.9px;height:15.6px;background:#bdbdbd"></div>
<div class="ab" style="left:604px;top:138.5px;width:85.5px;height:16px;background:#f0f0f0"></div>
<svg class="ic" style="left:607px;top:129.60px" width="4.2" height="2.8" viewBox="0 0 10 7"><path d="M0 3.5Q5 -2.5 10 3.5Q5 9.5 0 3.5Z" fill="#1a1a1a"/><circle cx="5" cy="3.5" r="1.1" fill="#777"/></svg>
<svg class="ic" style="left:607px;top:145.60px" width="4.2" height="2.8" viewBox="0 0 10 7"><path d="M0 3.5Q5 -2.5 10 3.5Q5 9.5 0 3.5Z" fill="#1a1a1a"/><circle cx="5" cy="3.5" r="1.1" fill="#777"/></svg>
<div class="ab" style="left:614px;top:124px;width:19.5px;height:13.5px;border:0.5px dashed #7a7a7a;background:#a9a9a9"></div>
<div class="ab" style="left:617.8px;top:125px;width:10.8px;height:8.6px;background:linear-gradient(110deg,#60d8f0,#7a70e0 50%,#8a50d8);border:0.6px solid #3a3a3a"></div>
<div class="ab" style="left:618.5px;top:133.6px;width:9.5px;height:1.8px;background:#e8e8e8;border:0.4px solid #555"></div>
<div class="ab" style="left:622.6px;top:133.8px;width:1.4px;height:1.4px;background:#333"></div>
<div class="ab" style="left:633.9px;top:128.5px;width:1.3px;height:4px;border:0.4px solid #666"></div>
<div class="ab" style="left:636px;top:124px;width:18.5px;height:13.5px;background:#fff;border:0.5px solid #999;border-radius:1px"></div>
<div class="t" style="left:657px;top:129px;font-size:3.1px;color:#444">Gradient Fill 1</div>
<div class="ab" style="left:614px;top:139.8px;width:19px;height:13.5px;background:#fff;border:0.5px solid #aaa;border-radius:1px"></div>
<div class="t" style="left:635.5px;top:145px;font-size:3.1px;color:#444">Background</div>
<svg class="ic" style="left:680.00px;top:144.70px" width="3.00" height="3.50" viewBox="0 0 10 10" ><rect x="1.5" y="4.5" width="7" height="5" fill="none" stroke="#666" stroke-width="1.2"/><path d="M3 4.5V2.5A2 2 0 0 1 7 2.5V4.5" stroke="#666" fill="none" stroke-width="1.2"/></svg>
<div class="ab" style="left:604px;top:376px;width:89px;height:6px;background:#f1f1f1"></div>
<div class="ab" style="left:689.5px;top:96px;width:4px;height:286px;background:#f4f4f4"></div>
<svg class="ic" style="left:631.00px;top:377.20px" width="4.00" height="3.50" viewBox="0 0 10 10" ><path d="M0 5H10" stroke="#888" stroke-width="2.5"/></svg>
<svg class="ic" style="left:639.00px;top:377.20px" width="4.00" height="3.50" viewBox="0 0 10 10" ><path d="M2 9L4 1H8M2.5 5H6M6 6L9 9M9 6L6 9" stroke="#333" stroke-width="1.2" fill="none"/></svg>
<svg class="ic" style="left:648.00px;top:377.20px" width="4.00" height="3.50" viewBox="0 0 10 10" ><rect x="0.5" y="1" width="9" height="8" rx="1" fill="#222"/><circle cx="5" cy="5" r="2.5" fill="#fff"/></svg>
<svg class="ic" style="left:656.00px;top:377.20px" width="4.00" height="3.50" viewBox="0 0 10 10" ><circle cx="5" cy="5" r="4" fill="#333"/><path d="M5 1A4 4 0 0 1 5 9Z" fill="#fff"/></svg>
<svg class="ic" style="left:664.00px;top:377.20px" width="4.00" height="3.50" viewBox="0 0 10 10" ><path d="M0.6 0.6H4L5 1.8H9.4V7.4H0.6Z" fill="none" stroke="#555" stroke-width="1.2"/></svg>
<svg class="ic" style="left:672.50px;top:377.20px" width="4.00" height="3.50" viewBox="0 0 10 10" ><rect x="1" y="1" width="8" height="8" fill="none" stroke="#555" stroke-width="1.2"/><path d="M5 3V7M3 5H7" stroke="#555"/></svg>
<svg class="ic" style="left:681.00px;top:377.20px" width="4.00" height="3.50" viewBox="0 0 10 10" ><path d="M2 3H8L7.5 9.5H2.5ZM1 2H9M4 1H6" fill="none" stroke="#555" stroke-width="1.2"/></svg>
<div class="ab" style="left:0;top:314.2px;width:141.3px;height:72.8px;background:#3a3a3a"></div>
<div class="ab" style="left:94px;top:361.5px;width:46.8px;height:24px;background:#4a4a4a"></div>
<div class="ab" style="left:1.30px;top:316.50px;width:21.8px;height:21.5px;background:linear-gradient(135deg,#000 38%,#0a4010 48%,#1a8a2a 58%,#20b838 72%)"></div>
<div class="ab" style="left:24.45px;top:316.50px;width:21.8px;height:21.5px;background:linear-gradient(135deg,#000 10%,rgba(0,0,0,0) 70%),repeating-conic-gradient(#c8c8c8 0 25%,#fff 0 50%) 0 0/6px 6px"></div>
<div class="ab" style="left:47.60px;top:316.50px;width:21.8px;height:21.5px;background:linear-gradient(135deg,#000 28%,#fff 80%)"></div>
<div class="ab" style="left:70.75px;top:316.50px;width:21.8px;height:21.5px;background:linear-gradient(135deg,#ff1010 30%,#b02020 55%,#7a2a20 80%,#106a10 95%)"></div>
<div class="ab" style="left:93.90px;top:316.50px;width:21.8px;height:21.5px;background:linear-gradient(135deg,#281880 15%,#a04010 55%,#f08000 85%)"></div>
<div class="ab" style="left:117.05px;top:316.50px;width:21.8px;height:21.5px;background:linear-gradient(135deg,#1010b0 25%,#e01010 50%,#ffb000 70%,#ffff00 85%)"></div>
<div class="ab" style="left:1.30px;top:339.70px;width:21.8px;height:21.5px;background:linear-gradient(135deg,#1010b0 30%,#ffff00 50%,#1010b0 70%)"></div>
<div class="ab" style="left:24.45px;top:339.70px;width:21.8px;height:21.5px;background:linear-gradient(135deg,#f07000 25%,#ffff00 55%,#f09000 85%)"></div>
<div class="ab" style="left:47.60px;top:339.70px;width:21.8px;height:21.5px;background:linear-gradient(135deg,#701880 20%,#1a5a1a 50%,#f08000 85%)"></div>
<div class="ab" style="left:70.75px;top:339.70px;width:21.8px;height:21.5px;background:linear-gradient(135deg,#ffff00 15%,#702080 40%,#f08000 60%,#101880 85%)"></div>
<div class="ab" style="left:93.90px;top:339.70px;width:21.8px;height:21.5px;background:linear-gradient(135deg,#8a4020 15%,#f0c8b8 45%,#fff 55%,#7a3010 85%)"></div>
<div class="ab" style="left:117.05px;top:339.70px;width:21.8px;height:21.5px;background:linear-gradient(135deg,#3080e0 15%,#fff 45%,#fff 55%,#6a3a10 65%,#f0a020 72%,#fff 85%)"></div>
<div class="ab" style="left:1.30px;top:362.90px;width:21.8px;height:21.5px;background:linear-gradient(135deg,#ff0000 10%,#ff00ff 25%,#0000ff 40%,#00ffff 55%,#00ff00 70%,#ffff00 85%,#ff0000 95%)"></div>
<div class="ab" style="left:24.45px;top:362.90px;width:21.8px;height:21.5px;background:linear-gradient(135deg,rgba(255,0,0,0) 15%,#ff0000 30%,#ffff00 42%,#00ff00 54%,#00ffff 64%,#0000ff 76%,rgba(0,0,255,0) 90%),repeating-conic-gradient(#c8c8c8 0 25%,#fff 0 50%) 0 0/6px 6px"></div>
<div class="ab" style="left:47.60px;top:362.90px;width:21.8px;height:21.5px;background:linear-gradient(135deg,rgba(255,255,255,0) 55%,rgba(255,255,255,0.6) 85%),repeating-linear-gradient(135deg,#fff 0 1.3px,#000 1.3px 2.9px,#fff 2.9px 4.2px),repeating-conic-gradient(#c8c8c8 0 25%,#fff 0 50%) 0 0/6px 6px"></div>
<div class="ab" style="left:70.75px;top:362.90px;width:21.8px;height:21.5px;background:linear-gradient(135deg,rgba(80,80,80,0.1),rgba(80,80,80,0.3)),repeating-conic-gradient(#c8c8c8 0 25%,#fff 0 50%) 0 0/6px 6px"></div>
<svg class="ab" style="left:0;top:0" width="700" height="432"><g stroke="#000" stroke-width="6.4" stroke-opacity="0.35"><line x1="25.85" y1="305.6" x2="116.3" y2="396.8"/><line x1="116.2" y1="305.9" x2="25.8" y2="396.5"/></g><g stroke="#f00" stroke-width="5.5"><line x1="25.85" y1="305.6" x2="116.3" y2="396.8"/><line x1="116.2" y1="305.9" x2="25.8" y2="396.5"/></g></svg>
<div class="ab" style="left:35px;top:398.7px;font-weight:bold;font-size:19.5px;line-height:21px;color:#111;white-space:nowrap;transform-origin:0 0;transform:scaleX(0.84);-webkit-text-stroke:0.95px #111;will-change:transform">Goodbye</div>
</body></html>
